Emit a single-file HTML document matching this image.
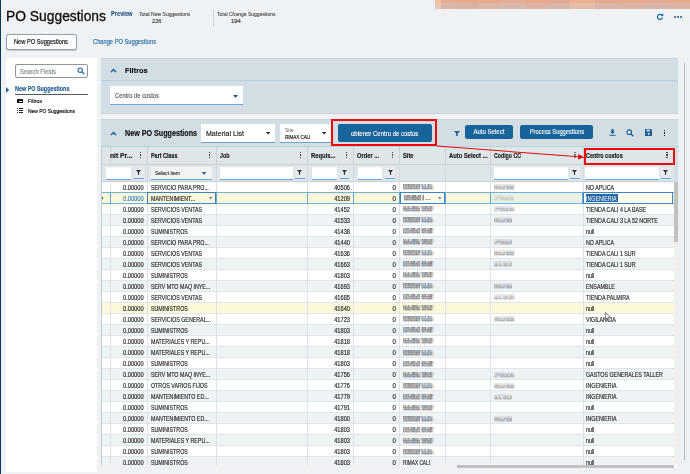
<!DOCTYPE html>
<html><head><meta charset="utf-8"><title>PO Suggestions</title>
<style>
html,body{margin:0;padding:0;}
body{width:690px;height:474px;overflow:hidden;position:relative;background:#eef2f5;font-family:"Liberation Sans", sans-serif;}
</style></head><body>
<svg width="0" height="0" style="position:absolute"><defs><symbol id="mz0" viewBox="0 0 31 6" width="31" height="6"><g filter="url(#bl)"><rect x="0.0" y="0.0" width="1.6" height="1.8" fill="#7a6455"/><rect x="0.0" y="1.8" width="1.6" height="1.8" fill="#5f6876"/><rect x="0.0" y="3.6" width="1.6" height="1.8" fill="#9a8270"/><rect x="1.6" y="0.0" width="1.6" height="1.8" fill="#66707e"/><rect x="1.6" y="1.8" width="1.6" height="1.8" fill="#9a8270"/><rect x="1.6" y="3.6" width="1.6" height="1.8" fill="#5a6f88"/><rect x="3.1" y="0.0" width="1.6" height="1.8" fill="#5a6f88"/><rect x="3.1" y="1.8" width="1.6" height="1.8" fill="#9a8270"/><rect x="3.1" y="3.6" width="1.6" height="1.8" fill="#66707e"/><rect x="4.7" y="0.0" width="1.6" height="1.8" fill="#5e5a5e"/><rect x="4.7" y="1.8" width="1.6" height="1.8" fill="#66707e"/><rect x="4.7" y="3.6" width="1.6" height="1.8" fill="#66707e"/><rect x="6.2" y="0.0" width="1.6" height="1.8" fill="#5f6876"/><rect x="6.2" y="1.8" width="1.6" height="1.8" fill="#5f6876"/><rect x="6.2" y="3.6" width="1.6" height="1.8" fill="#7a6455"/><rect x="7.8" y="0.0" width="1.6" height="1.8" fill="#7a6455"/><rect x="7.8" y="1.8" width="1.6" height="1.8" fill="#66707e"/><rect x="7.8" y="3.6" width="1.6" height="1.8" fill="#7a6455"/><rect x="9.3" y="0.0" width="1.6" height="1.8" fill="#66707e"/><rect x="9.3" y="1.8" width="1.6" height="1.8" fill="#8a7868"/><rect x="9.3" y="3.6" width="1.6" height="1.8" fill="#5a6f88"/><rect x="10.9" y="0.0" width="1.6" height="1.8" fill="#66707e"/><rect x="10.9" y="1.8" width="1.6" height="1.8" fill="#9a8270"/><rect x="10.9" y="3.6" width="1.6" height="1.8" fill="#8a7868"/><rect x="12.4" y="0.0" width="1.6" height="1.8" fill="#8092a6"/><rect x="12.4" y="1.8" width="1.6" height="1.8" fill="#5e5a5e"/><rect x="12.4" y="3.6" width="1.6" height="1.8" fill="#5e5a5e"/><rect x="14.0" y="0.0" width="1.6" height="1.8" fill="#707a88"/><rect x="14.0" y="1.8" width="1.6" height="1.8" fill="#8a7868"/><rect x="14.0" y="3.6" width="1.6" height="1.8" fill="#707a88"/><rect x="15.5" y="0.0" width="1.6" height="1.8" fill="#5a6f88"/><rect x="15.5" y="1.8" width="1.6" height="1.8" fill="#55657a"/><rect x="15.5" y="3.6" width="1.6" height="1.8" fill="#8a7868"/><rect x="17.1" y="0.0" width="1.6" height="1.8" fill="#a9bcd2"/><rect x="17.1" y="1.8" width="1.6" height="1.8" fill="#b9c6d6"/><rect x="18.6" y="0.0" width="1.6" height="1.8" fill="#8a7868"/><rect x="18.6" y="1.8" width="1.6" height="1.8" fill="#8a7868"/><rect x="18.6" y="3.6" width="1.6" height="1.8" fill="#66707e"/><rect x="20.2" y="0.0" width="1.6" height="1.8" fill="#b9c6d6"/><rect x="20.2" y="1.8" width="1.6" height="1.8" fill="#707a88"/><rect x="20.2" y="3.6" width="1.6" height="1.8" fill="#5a6f88"/><rect x="21.7" y="0.0" width="1.6" height="1.8" fill="#707a88"/><rect x="21.7" y="1.8" width="1.6" height="1.8" fill="#8092a6"/><rect x="21.7" y="3.6" width="1.6" height="1.8" fill="#55657a"/><rect x="23.3" y="0.0" width="1.6" height="1.8" fill="#c9d3df"/><rect x="23.3" y="1.8" width="1.6" height="1.8" fill="#8092a6"/><rect x="23.3" y="3.6" width="1.6" height="1.8" fill="#66707e"/><rect x="24.8" y="0.0" width="1.6" height="1.8" fill="#5f6876"/><rect x="24.8" y="1.8" width="1.6" height="1.8" fill="#707a88"/><rect x="24.8" y="3.6" width="1.6" height="1.8" fill="#5e5a5e"/><rect x="26.4" y="0.0" width="1.6" height="1.8" fill="#8092a6"/><rect x="26.4" y="1.8" width="1.6" height="1.8" fill="#8092a6"/><rect x="26.4" y="3.6" width="1.6" height="1.8" fill="#707a88"/><rect x="27.9" y="0.0" width="1.6" height="1.8" fill="#a9bcd2"/><rect x="27.9" y="1.8" width="1.6" height="1.8" fill="#707a88"/><rect x="27.9" y="3.6" width="1.6" height="1.8" fill="#8a7868"/><rect x="29.5" y="1.8" width="1.6" height="1.8" fill="#d8c2a8"/><rect x="29.5" y="3.6" width="1.6" height="1.8" fill="#d8c2a8"/></g></symbol><symbol id="mc0" viewBox="0 0 21 6" width="21" height="6"><g filter="url(#bl)" opacity="0.6"><rect x="0.0" y="0.0" width="1.6" height="1.8" fill="#d8c2a8"/><rect x="0.0" y="1.8" width="1.6" height="1.8" fill="#5f6876"/><rect x="0.0" y="3.6" width="1.6" height="1.8" fill="#8092a6"/><rect x="1.6" y="0.0" width="1.6" height="1.8" fill="#c8cdd4"/><rect x="1.6" y="1.8" width="1.6" height="1.8" fill="#7a6455"/><rect x="1.6" y="3.6" width="1.6" height="1.8" fill="#707a88"/><rect x="3.1" y="0.0" width="1.6" height="1.8" fill="#d8c2a8"/><rect x="3.1" y="1.8" width="1.6" height="1.8" fill="#55657a"/><rect x="3.1" y="3.6" width="1.6" height="1.8" fill="#9a8270"/><rect x="4.7" y="0.0" width="1.6" height="1.8" fill="#e2cfb6"/><rect x="4.7" y="1.8" width="1.6" height="1.8" fill="#8a7868"/><rect x="4.7" y="3.6" width="1.6" height="1.8" fill="#7a6455"/><rect x="6.2" y="0.0" width="1.6" height="1.8" fill="#c8cdd4"/><rect x="6.2" y="1.8" width="1.6" height="1.8" fill="#9a8270"/><rect x="6.2" y="3.6" width="1.6" height="1.8" fill="#66707e"/><rect x="7.8" y="0.0" width="1.6" height="1.8" fill="#c8cdd4"/><rect x="7.8" y="1.8" width="1.6" height="1.8" fill="#d8c2a8"/><rect x="7.8" y="3.6" width="1.6" height="1.8" fill="#5f6876"/><rect x="9.3" y="0.0" width="1.6" height="1.8" fill="#e2cfb6"/><rect x="9.3" y="1.8" width="1.6" height="1.8" fill="#55657a"/><rect x="9.3" y="3.6" width="1.6" height="1.8" fill="#55657a"/><rect x="10.9" y="0.0" width="1.6" height="1.8" fill="#b9c6d6"/><rect x="10.9" y="1.8" width="1.6" height="1.8" fill="#8092a6"/><rect x="10.9" y="3.6" width="1.6" height="1.8" fill="#b9c6d6"/><rect x="12.4" y="0.0" width="1.6" height="1.8" fill="#d8c2a8"/><rect x="12.4" y="1.8" width="1.6" height="1.8" fill="#5a6f88"/><rect x="12.4" y="3.6" width="1.6" height="1.8" fill="#5e5a5e"/><rect x="14.0" y="0.0" width="1.6" height="1.8" fill="#b9c6d6"/><rect x="14.0" y="1.8" width="1.6" height="1.8" fill="#8a7868"/><rect x="14.0" y="3.6" width="1.6" height="1.8" fill="#66707e"/><rect x="15.5" y="0.0" width="1.6" height="1.8" fill="#b9c6d6"/><rect x="15.5" y="1.8" width="1.6" height="1.8" fill="#66707e"/><rect x="15.5" y="3.6" width="1.6" height="1.8" fill="#7a6455"/><rect x="17.1" y="0.0" width="1.6" height="1.8" fill="#c9d3df"/><rect x="17.1" y="1.8" width="1.6" height="1.8" fill="#66707e"/><rect x="17.1" y="3.6" width="1.6" height="1.8" fill="#5f6876"/><rect x="18.6" y="0.0" width="1.6" height="1.8" fill="#d8c2a8"/><rect x="18.6" y="1.8" width="1.6" height="1.8" fill="#66707e"/><rect x="18.6" y="3.6" width="1.6" height="1.8" fill="#55657a"/></g></symbol><symbol id="mz1" viewBox="0 0 31 6" width="31" height="6"><g filter="url(#bl)"><rect x="0.0" y="0.0" width="1.6" height="1.8" fill="#707a88"/><rect x="0.0" y="1.8" width="1.6" height="1.8" fill="#66707e"/><rect x="0.0" y="3.6" width="1.6" height="1.8" fill="#5a6f88"/><rect x="1.6" y="0.0" width="1.6" height="1.8" fill="#8092a6"/><rect x="1.6" y="1.8" width="1.6" height="1.8" fill="#8092a6"/><rect x="1.6" y="3.6" width="1.6" height="1.8" fill="#707a88"/><rect x="3.1" y="0.0" width="1.6" height="1.8" fill="#5a6f88"/><rect x="3.1" y="1.8" width="1.6" height="1.8" fill="#707a88"/><rect x="3.1" y="3.6" width="1.6" height="1.8" fill="#7a6455"/><rect x="4.7" y="0.0" width="1.6" height="1.8" fill="#5e5a5e"/><rect x="4.7" y="1.8" width="1.6" height="1.8" fill="#9a8270"/><rect x="4.7" y="3.6" width="1.6" height="1.8" fill="#9a8270"/><rect x="6.2" y="0.0" width="1.6" height="1.8" fill="#e2cfb6"/><rect x="6.2" y="1.8" width="1.6" height="1.8" fill="#5a6f88"/><rect x="6.2" y="3.6" width="1.6" height="1.8" fill="#707a88"/><rect x="7.8" y="0.0" width="1.6" height="1.8" fill="#7a6455"/><rect x="7.8" y="1.8" width="1.6" height="1.8" fill="#5e5a5e"/><rect x="7.8" y="3.6" width="1.6" height="1.8" fill="#9a8270"/><rect x="9.3" y="0.0" width="1.6" height="1.8" fill="#5e5a5e"/><rect x="9.3" y="1.8" width="1.6" height="1.8" fill="#5e5a5e"/><rect x="9.3" y="3.6" width="1.6" height="1.8" fill="#55657a"/><rect x="10.9" y="0.0" width="1.6" height="1.8" fill="#5e5a5e"/><rect x="10.9" y="1.8" width="1.6" height="1.8" fill="#8092a6"/><rect x="10.9" y="3.6" width="1.6" height="1.8" fill="#5f6876"/><rect x="12.4" y="0.0" width="1.6" height="1.8" fill="#c9d3df"/><rect x="12.4" y="1.8" width="1.6" height="1.8" fill="#5e5a5e"/><rect x="12.4" y="3.6" width="1.6" height="1.8" fill="#8a7868"/><rect x="14.0" y="0.0" width="1.6" height="1.8" fill="#8a7868"/><rect x="14.0" y="1.8" width="1.6" height="1.8" fill="#8a7868"/><rect x="14.0" y="3.6" width="1.6" height="1.8" fill="#5a6f88"/><rect x="15.5" y="0.0" width="1.6" height="1.8" fill="#5e5a5e"/><rect x="15.5" y="1.8" width="1.6" height="1.8" fill="#8092a6"/><rect x="15.5" y="3.6" width="1.6" height="1.8" fill="#66707e"/><rect x="17.1" y="1.8" width="1.6" height="1.8" fill="#c9d3df"/><rect x="18.6" y="0.0" width="1.6" height="1.8" fill="#5a6f88"/><rect x="18.6" y="1.8" width="1.6" height="1.8" fill="#5e5a5e"/><rect x="18.6" y="3.6" width="1.6" height="1.8" fill="#7a6455"/><rect x="20.2" y="0.0" width="1.6" height="1.8" fill="#8a7868"/><rect x="20.2" y="1.8" width="1.6" height="1.8" fill="#55657a"/><rect x="20.2" y="3.6" width="1.6" height="1.8" fill="#5a6f88"/><rect x="21.7" y="0.0" width="1.6" height="1.8" fill="#7a6455"/><rect x="21.7" y="1.8" width="1.6" height="1.8" fill="#5f6876"/><rect x="21.7" y="3.6" width="1.6" height="1.8" fill="#8092a6"/><rect x="23.3" y="0.0" width="1.6" height="1.8" fill="#d8c2a8"/><rect x="23.3" y="1.8" width="1.6" height="1.8" fill="#66707e"/><rect x="23.3" y="3.6" width="1.6" height="1.8" fill="#8a7868"/><rect x="24.8" y="0.0" width="1.6" height="1.8" fill="#9a8270"/><rect x="24.8" y="1.8" width="1.6" height="1.8" fill="#5f6876"/><rect x="24.8" y="3.6" width="1.6" height="1.8" fill="#5a6f88"/><rect x="26.4" y="0.0" width="1.6" height="1.8" fill="#7a6455"/><rect x="26.4" y="1.8" width="1.6" height="1.8" fill="#5e5a5e"/><rect x="26.4" y="3.6" width="1.6" height="1.8" fill="#5e5a5e"/><rect x="27.9" y="0.0" width="1.6" height="1.8" fill="#5e5a5e"/><rect x="27.9" y="1.8" width="1.6" height="1.8" fill="#5e5a5e"/><rect x="27.9" y="3.6" width="1.6" height="1.8" fill="#8a7868"/><rect x="29.5" y="0.0" width="1.6" height="1.8" fill="#a9bcd2"/><rect x="29.5" y="3.6" width="1.6" height="1.8" fill="#c9d3df"/></g></symbol><symbol id="mc1" viewBox="0 0 21 6" width="21" height="6"><g filter="url(#bl)" opacity="0.6"><rect x="0.0" y="0.0" width="1.6" height="1.8" fill="#c8cdd4"/><rect x="0.0" y="1.8" width="1.6" height="1.8" fill="#b9c6d6"/><rect x="0.0" y="3.6" width="1.6" height="1.8" fill="#66707e"/><rect x="1.6" y="0.0" width="1.6" height="1.8" fill="#c8cdd4"/><rect x="1.6" y="1.8" width="1.6" height="1.8" fill="#9a8270"/><rect x="1.6" y="3.6" width="1.6" height="1.8" fill="#55657a"/><rect x="3.1" y="0.0" width="1.6" height="1.8" fill="#c8cdd4"/><rect x="3.1" y="1.8" width="1.6" height="1.8" fill="#e2cfb6"/><rect x="3.1" y="3.6" width="1.6" height="1.8" fill="#9a8270"/><rect x="4.7" y="0.0" width="1.6" height="1.8" fill="#d8c2a8"/><rect x="4.7" y="1.8" width="1.6" height="1.8" fill="#9a8270"/><rect x="4.7" y="3.6" width="1.6" height="1.8" fill="#9a8270"/><rect x="6.2" y="0.0" width="1.6" height="1.8" fill="#a9bcd2"/><rect x="6.2" y="1.8" width="1.6" height="1.8" fill="#c9d3df"/><rect x="6.2" y="3.6" width="1.6" height="1.8" fill="#7a6455"/><rect x="7.8" y="0.0" width="1.6" height="1.8" fill="#c8cdd4"/><rect x="7.8" y="1.8" width="1.6" height="1.8" fill="#c9d3df"/><rect x="7.8" y="3.6" width="1.6" height="1.8" fill="#c9d3df"/><rect x="9.3" y="0.0" width="1.6" height="1.8" fill="#d8c2a8"/><rect x="9.3" y="1.8" width="1.6" height="1.8" fill="#8092a6"/><rect x="9.3" y="3.6" width="1.6" height="1.8" fill="#66707e"/><rect x="10.9" y="0.0" width="1.6" height="1.8" fill="#c8cdd4"/><rect x="10.9" y="1.8" width="1.6" height="1.8" fill="#9a8270"/><rect x="10.9" y="3.6" width="1.6" height="1.8" fill="#5f6876"/><rect x="12.4" y="0.0" width="1.6" height="1.8" fill="#e2cfb6"/><rect x="12.4" y="1.8" width="1.6" height="1.8" fill="#9a8270"/><rect x="12.4" y="3.6" width="1.6" height="1.8" fill="#9a8270"/><rect x="14.0" y="0.0" width="1.6" height="1.8" fill="#b9c6d6"/><rect x="14.0" y="1.8" width="1.6" height="1.8" fill="#e2cfb6"/><rect x="14.0" y="3.6" width="1.6" height="1.8" fill="#9a8270"/><rect x="15.5" y="0.0" width="1.6" height="1.8" fill="#d8c2a8"/><rect x="15.5" y="1.8" width="1.6" height="1.8" fill="#707a88"/><rect x="15.5" y="3.6" width="1.6" height="1.8" fill="#5f6876"/><rect x="17.1" y="0.0" width="1.6" height="1.8" fill="#c8cdd4"/><rect x="17.1" y="1.8" width="1.6" height="1.8" fill="#9a8270"/><rect x="17.1" y="3.6" width="1.6" height="1.8" fill="#8092a6"/><rect x="18.6" y="0.0" width="1.6" height="1.8" fill="#b9c6d6"/><rect x="18.6" y="1.8" width="1.6" height="1.8" fill="#8092a6"/><rect x="18.6" y="3.6" width="1.6" height="1.8" fill="#8a7868"/></g></symbol><symbol id="mz2" viewBox="0 0 31 6" width="31" height="6"><g filter="url(#bl)"><rect x="0.0" y="0.0" width="1.6" height="1.8" fill="#9a8270"/><rect x="0.0" y="1.8" width="1.6" height="1.8" fill="#5e5a5e"/><rect x="0.0" y="3.6" width="1.6" height="1.8" fill="#8092a6"/><rect x="1.6" y="0.0" width="1.6" height="1.8" fill="#8092a6"/><rect x="1.6" y="1.8" width="1.6" height="1.8" fill="#5e5a5e"/><rect x="1.6" y="3.6" width="1.6" height="1.8" fill="#707a88"/><rect x="3.1" y="0.0" width="1.6" height="1.8" fill="#d8c2a8"/><rect x="3.1" y="1.8" width="1.6" height="1.8" fill="#7a6455"/><rect x="3.1" y="3.6" width="1.6" height="1.8" fill="#55657a"/><rect x="4.7" y="0.0" width="1.6" height="1.8" fill="#5a6f88"/><rect x="4.7" y="1.8" width="1.6" height="1.8" fill="#55657a"/><rect x="4.7" y="3.6" width="1.6" height="1.8" fill="#707a88"/><rect x="6.2" y="0.0" width="1.6" height="1.8" fill="#d8c2a8"/><rect x="6.2" y="1.8" width="1.6" height="1.8" fill="#8a7868"/><rect x="6.2" y="3.6" width="1.6" height="1.8" fill="#7a6455"/><rect x="7.8" y="0.0" width="1.6" height="1.8" fill="#d8c2a8"/><rect x="7.8" y="1.8" width="1.6" height="1.8" fill="#5a6f88"/><rect x="7.8" y="3.6" width="1.6" height="1.8" fill="#8092a6"/><rect x="9.3" y="0.0" width="1.6" height="1.8" fill="#5e5a5e"/><rect x="9.3" y="1.8" width="1.6" height="1.8" fill="#55657a"/><rect x="9.3" y="3.6" width="1.6" height="1.8" fill="#55657a"/><rect x="10.9" y="0.0" width="1.6" height="1.8" fill="#5e5a5e"/><rect x="10.9" y="1.8" width="1.6" height="1.8" fill="#5a6f88"/><rect x="10.9" y="3.6" width="1.6" height="1.8" fill="#5f6876"/><rect x="12.4" y="0.0" width="1.6" height="1.8" fill="#8092a6"/><rect x="12.4" y="1.8" width="1.6" height="1.8" fill="#5f6876"/><rect x="12.4" y="3.6" width="1.6" height="1.8" fill="#9a8270"/><rect x="14.0" y="0.0" width="1.6" height="1.8" fill="#9a8270"/><rect x="14.0" y="1.8" width="1.6" height="1.8" fill="#5a6f88"/><rect x="14.0" y="3.6" width="1.6" height="1.8" fill="#5e5a5e"/><rect x="15.5" y="0.0" width="1.6" height="1.8" fill="#b9c6d6"/><rect x="15.5" y="1.8" width="1.6" height="1.8" fill="#707a88"/><rect x="15.5" y="3.6" width="1.6" height="1.8" fill="#7a6455"/><rect x="17.1" y="0.0" width="1.6" height="1.8" fill="#d8c2a8"/><rect x="18.6" y="0.0" width="1.6" height="1.8" fill="#707a88"/><rect x="18.6" y="1.8" width="1.6" height="1.8" fill="#9a8270"/><rect x="18.6" y="3.6" width="1.6" height="1.8" fill="#66707e"/><rect x="20.2" y="0.0" width="1.6" height="1.8" fill="#8a7868"/><rect x="20.2" y="1.8" width="1.6" height="1.8" fill="#5f6876"/><rect x="20.2" y="3.6" width="1.6" height="1.8" fill="#7a6455"/><rect x="21.7" y="0.0" width="1.6" height="1.8" fill="#5a6f88"/><rect x="21.7" y="1.8" width="1.6" height="1.8" fill="#5f6876"/><rect x="21.7" y="3.6" width="1.6" height="1.8" fill="#707a88"/><rect x="23.3" y="0.0" width="1.6" height="1.8" fill="#5e5a5e"/><rect x="23.3" y="1.8" width="1.6" height="1.8" fill="#5a6f88"/><rect x="23.3" y="3.6" width="1.6" height="1.8" fill="#8a7868"/><rect x="24.8" y="0.0" width="1.6" height="1.8" fill="#a9bcd2"/><rect x="24.8" y="1.8" width="1.6" height="1.8" fill="#707a88"/><rect x="24.8" y="3.6" width="1.6" height="1.8" fill="#5f6876"/><rect x="26.4" y="0.0" width="1.6" height="1.8" fill="#5e5a5e"/><rect x="26.4" y="1.8" width="1.6" height="1.8" fill="#7a6455"/><rect x="26.4" y="3.6" width="1.6" height="1.8" fill="#7a6455"/><rect x="27.9" y="0.0" width="1.6" height="1.8" fill="#707a88"/><rect x="27.9" y="1.8" width="1.6" height="1.8" fill="#9a8270"/><rect x="27.9" y="3.6" width="1.6" height="1.8" fill="#707a88"/><rect x="29.5" y="0.0" width="1.6" height="1.8" fill="#d8c2a8"/><rect x="29.5" y="1.8" width="1.6" height="1.8" fill="#b9c6d6"/></g></symbol><symbol id="mc2" viewBox="0 0 21 6" width="21" height="6"><g filter="url(#bl)" opacity="0.6"><rect x="0.0" y="0.0" width="1.6" height="1.8" fill="#b9c6d6"/><rect x="0.0" y="1.8" width="1.6" height="1.8" fill="#d8c2a8"/><rect x="0.0" y="3.6" width="1.6" height="1.8" fill="#9a8270"/><rect x="1.6" y="0.0" width="1.6" height="1.8" fill="#d8c2a8"/><rect x="1.6" y="1.8" width="1.6" height="1.8" fill="#9a8270"/><rect x="1.6" y="3.6" width="1.6" height="1.8" fill="#8092a6"/><rect x="3.1" y="0.0" width="1.6" height="1.8" fill="#a9bcd2"/><rect x="3.1" y="1.8" width="1.6" height="1.8" fill="#5a6f88"/><rect x="3.1" y="3.6" width="1.6" height="1.8" fill="#b9c6d6"/><rect x="4.7" y="0.0" width="1.6" height="1.8" fill="#c8cdd4"/><rect x="4.7" y="1.8" width="1.6" height="1.8" fill="#55657a"/><rect x="4.7" y="3.6" width="1.6" height="1.8" fill="#b9c6d6"/><rect x="6.2" y="0.0" width="1.6" height="1.8" fill="#a9bcd2"/><rect x="6.2" y="1.8" width="1.6" height="1.8" fill="#9a8270"/><rect x="6.2" y="3.6" width="1.6" height="1.8" fill="#707a88"/><rect x="7.8" y="0.0" width="1.6" height="1.8" fill="#c8cdd4"/><rect x="7.8" y="1.8" width="1.6" height="1.8" fill="#5e5a5e"/><rect x="7.8" y="3.6" width="1.6" height="1.8" fill="#8a7868"/><rect x="9.3" y="0.0" width="1.6" height="1.8" fill="#d8c2a8"/><rect x="9.3" y="1.8" width="1.6" height="1.8" fill="#55657a"/><rect x="9.3" y="3.6" width="1.6" height="1.8" fill="#8a7868"/><rect x="10.9" y="0.0" width="1.6" height="1.8" fill="#c8cdd4"/><rect x="10.9" y="1.8" width="1.6" height="1.8" fill="#a9bcd2"/><rect x="10.9" y="3.6" width="1.6" height="1.8" fill="#7a6455"/><rect x="12.4" y="0.0" width="1.6" height="1.8" fill="#c9d3df"/><rect x="12.4" y="1.8" width="1.6" height="1.8" fill="#55657a"/><rect x="12.4" y="3.6" width="1.6" height="1.8" fill="#7a6455"/><rect x="14.0" y="0.0" width="1.6" height="1.8" fill="#a9bcd2"/><rect x="14.0" y="1.8" width="1.6" height="1.8" fill="#a9bcd2"/><rect x="14.0" y="3.6" width="1.6" height="1.8" fill="#9a8270"/><rect x="15.5" y="0.0" width="1.6" height="1.8" fill="#c8cdd4"/><rect x="15.5" y="1.8" width="1.6" height="1.8" fill="#707a88"/><rect x="15.5" y="3.6" width="1.6" height="1.8" fill="#66707e"/><rect x="17.1" y="0.0" width="1.6" height="1.8" fill="#c9d3df"/><rect x="17.1" y="1.8" width="1.6" height="1.8" fill="#5f6876"/><rect x="17.1" y="3.6" width="1.6" height="1.8" fill="#8092a6"/><rect x="18.6" y="0.0" width="1.6" height="1.8" fill="#c9d3df"/><rect x="18.6" y="1.8" width="1.6" height="1.8" fill="#8092a6"/><rect x="18.6" y="3.6" width="1.6" height="1.8" fill="#5f6876"/></g></symbol><filter id="bl" x="-10%" y="-20%" width="120%" height="140%"><feGaussianBlur stdDeviation="0.35"/></filter></defs></svg>
<div style="position:absolute;left:0px;top:0px;width:1.2px;height:474px;background:#0b3b52"></div>
<div style="position:absolute;left:6.00px;top:8.95px;font-size:14px;line-height:14px;font-weight:normal;color:#0d0d0d;white-space:pre;transform:scaleX(0.988);transform-origin:0 0;-webkit-text-stroke:0.3px #0d0d0d;">PO Suggestions</div>
<div style="position:absolute;left:111.00px;top:10.64px;font-size:6.8px;line-height:6.8px;font-weight:bold;color:#1d4f7c;white-space:pre;transform:scaleX(0.836);transform-origin:0 0;-webkit-text-stroke:0.1px #1d4f7c;">Preview</div>
<div style="position:absolute;left:138.60px;top:11.66px;font-size:5.6px;line-height:5.6px;font-weight:normal;color:#5a5a5a;white-space:pre;transform:scaleX(0.901);transform-origin:0 0;-webkit-text-stroke:0.18px #5a5a5a;">Total New Suggestions</div>
<div style="position:absolute;left:152.20px;top:18.12px;font-size:6px;line-height:6px;font-weight:normal;color:#444;white-space:pre;transform:scaleX(0.949);transform-origin:0 0;-webkit-text-stroke:0.18px #444;">226</div>
<div style="position:absolute;left:213px;top:8.7px;width:0.8px;height:18px;background:#cfd6db"></div>
<div style="position:absolute;left:217.10px;top:11.66px;font-size:5.6px;line-height:5.6px;font-weight:normal;color:#5a5a5a;white-space:pre;transform:scaleX(0.896);transform-origin:0 0;-webkit-text-stroke:0.18px #5a5a5a;">Total Change Suggestions</div>
<div style="position:absolute;left:231.00px;top:18.12px;font-size:6px;line-height:6px;font-weight:normal;color:#444;white-space:pre;transform:scaleX(0.989);transform-origin:0 0;-webkit-text-stroke:0.18px #444;">194</div>
<svg style="position:absolute;left:656px;top:13px" width="8" height="8" viewBox="0 0 8 8"><path d="M6.1 2.6A2.5 2.5 0 1 0 6.4 4.5" fill="none" stroke="#1f6aa5" stroke-width="1.25"/><path d="M4.6 1.9L7.3 0.6L7.1 3.6Z" fill="#1f6aa5"/></svg>
<div style="position:absolute;left:674.4px;top:15.8px;width:1.9px;height:1.9px;background:#1f5a85;border-radius:50%"></div>
<div style="position:absolute;left:677.3px;top:15.8px;width:1.9px;height:1.9px;background:#1f5a85;border-radius:50%"></div>
<div style="position:absolute;left:680.1999999999999px;top:15.8px;width:1.9px;height:1.9px;background:#1f5a85;border-radius:50%"></div>
<div style="position:absolute;left:5.5px;top:33.5px;width:71px;height:16px;background:#fbfcfd;border:1px solid #979fa5;border-radius:2.5px;box-sizing:border-box;box-shadow:0 0.6px 1px rgba(0,0,0,.18)"></div>
<div style="position:absolute;left:14.00px;top:39.04px;font-size:6.8px;line-height:6.8px;font-weight:normal;color:#111;white-space:pre;transform:scaleX(0.835);transform-origin:0 0;-webkit-text-stroke:0.18px #111;">New PO Suggestions</div>
<div style="position:absolute;left:93.00px;top:39.24px;font-size:6.8px;line-height:6.8px;font-weight:normal;color:#2b6fa3;white-space:pre;transform:scaleX(0.842);transform-origin:0 0;-webkit-text-stroke:0.18px #2b6fa3;">Change PO Suggestions</div>
<div style="position:absolute;left:6px;top:58px;width:91px;height:414px;background:#fff"></div>
<div style="position:absolute;left:14.7px;top:64.2px;width:73.1px;height:14.1px;background:#fff;border:1px solid #8e969b;border-radius:2px;box-sizing:border-box"></div>
<div style="position:absolute;left:20.00px;top:68.54px;font-size:6.8px;line-height:6.8px;font-weight:normal;color:#858a8e;white-space:pre;transform:scaleX(0.866);transform-origin:0 0;-webkit-text-stroke:0.18px #858a8e;">Search Fields</div>
<svg style="position:absolute;left:77px;top:66.5px" width="8" height="8" viewBox="0 0 8 8"><circle cx="3.2" cy="3.2" r="2.2" fill="none" stroke="#2a6ea8" stroke-width="1.1"/><path d="M4.8 4.8L7.2 7.2" stroke="#2a6ea8" stroke-width="1.3"/></svg>
<svg style="position:absolute;left:6px;top:86.5px" width="4" height="6" viewBox="0 0 4 6"><path d="M0 0L3.2 3L0 6Z" fill="#1f6aa5"/></svg>
<div style="position:absolute;left:15.00px;top:85.21px;font-size:7.2px;line-height:7.2px;font-weight:bold;color:#1b5990;white-space:pre;transform:scaleX(0.753);transform-origin:0 0;-webkit-text-stroke:0.15px #1b5990;">New PO Suggestions</div>
<div style="position:absolute;left:14.7px;top:93.8px;width:73.6px;height:1.2px;background:#555b60"></div>
<div style="position:absolute;left:17px;top:99.2px;width:6px;height:4px;background:#111;border-radius:0.6px"></div>
<div style="position:absolute;left:18.5px;top:100.6px;width:3px;height:0.8px;background:#fff"></div>
<div style="position:absolute;left:27.50px;top:98.12px;font-size:6px;line-height:6px;font-weight:normal;color:#111;white-space:pre;transform:scaleX(0.857);transform-origin:0 0;-webkit-text-stroke:0.18px #111;">Filtros</div>
<div style="position:absolute;left:17px;top:108.0px;width:1.2px;height:1.1px;background:#222"></div>
<div style="position:absolute;left:18.8px;top:108.0px;width:4.2px;height:1.1px;background:#222"></div>
<div style="position:absolute;left:17px;top:109.9px;width:1.2px;height:1.1px;background:#222"></div>
<div style="position:absolute;left:18.8px;top:109.9px;width:4.2px;height:1.1px;background:#222"></div>
<div style="position:absolute;left:17px;top:111.8px;width:1.2px;height:1.1px;background:#222"></div>
<div style="position:absolute;left:18.8px;top:111.8px;width:4.2px;height:1.1px;background:#222"></div>
<div style="position:absolute;left:27.50px;top:108.12px;font-size:6px;line-height:6px;font-weight:normal;color:#111;white-space:pre;transform:scaleX(0.824);transform-origin:0 0;-webkit-text-stroke:0.18px #111;">New PO Suggestions</div>
<div style="position:absolute;left:100.5px;top:58px;width:578.5px;height:55.7px;background:#d2dee4"></div>
<div style="position:absolute;left:100.5px;top:79.7px;width:578.5px;height:1.8px;background:#b5d1db"></div>
<div style="position:absolute;left:100.5px;top:57.6px;width:578.5px;height:0.8px;background:#cdd3d7"></div>
<div style="position:absolute;left:100.5px;top:113.2px;width:578.5px;height:0.8px;background:#cdd3d7"></div>
<svg style="position:absolute;left:110px;top:67.5px" width="7" height="5" viewBox="0 0 7 5"><path d="M1 4L3.5 1.5L6 4" fill="none" stroke="#1f5f95" stroke-width="1.5"/></svg>
<div style="position:absolute;left:124.50px;top:66.57px;font-size:7.6px;line-height:7.6px;font-weight:bold;color:#111;white-space:pre;transform:scaleX(0.977);transform-origin:0 0;-webkit-text-stroke:0.15px #111;">Filtros</div>
<div style="position:absolute;left:110px;top:86.3px;width:133px;height:18.7px;background:#fff;border-bottom:1.5px solid #6aa6cc;box-sizing:border-box"></div>
<div style="position:absolute;left:115.00px;top:93.44px;font-size:6.8px;line-height:6.8px;font-weight:normal;color:#5f5f5f;white-space:pre;transform:scaleX(0.856);transform-origin:0 0;-webkit-text-stroke:0.18px #5f5f5f;">Centro de costos</div>
<svg style="position:absolute;left:233px;top:94.5px" width="5" height="3" viewBox="0 0 5 3"><path d="M0 0H5L2.5 3Z" fill="#1f5f95"/></svg>
<div style="position:absolute;left:100.5px;top:119.4px;width:578.5px;height:348px;background:#d2dee4"></div>
<div style="position:absolute;left:100.5px;top:119px;width:578.5px;height:0.8px;background:#cdd3d7"></div>
<div style="position:absolute;left:678.3px;top:58px;width:1px;height:55.7px;background:#e9eef1"></div>
<div style="position:absolute;left:678.3px;top:119.4px;width:1px;height:348px;background:#e9eef1"></div>
<svg style="position:absolute;left:110px;top:130.5px" width="7" height="5" viewBox="0 0 7 5"><path d="M1 4L3.5 1.5L6 4" fill="none" stroke="#1f5f95" stroke-width="1.5"/></svg>
<div style="position:absolute;left:124.70px;top:128.89px;font-size:8.4px;line-height:8.4px;font-weight:bold;color:#111;white-space:pre;transform:scaleX(0.856);transform-origin:0 0;-webkit-text-stroke:0.15px #111;">New PO Suggestions</div>
<div style="position:absolute;left:201px;top:123.7px;width:74px;height:19px;background:#fff;border-bottom:1.5px solid #6aa6cc;box-sizing:border-box"></div>
<div style="position:absolute;left:205.90px;top:129.83px;font-size:8px;line-height:8px;font-weight:normal;color:#222;white-space:pre;transform:scaleX(0.881);transform-origin:0 0;-webkit-text-stroke:0.18px #222;">Material List</div>
<svg style="position:absolute;left:266px;top:132.4px" width="4.2" height="2.6" viewBox="0 0 5 3"><path d="M0 0H5L2.5 3Z" fill="#222"/></svg>
<div style="position:absolute;left:280px;top:123.7px;width:50.5px;height:19px;background:#fff;border-bottom:1.5px solid #6aa6cc;box-sizing:border-box"></div>
<div style="position:absolute;left:284.50px;top:127.57px;font-size:5px;line-height:5px;font-weight:normal;color:#666;white-space:pre;transform:scaleX(0.986);transform-origin:0 0;">Site</div>
<div style="position:absolute;left:284.50px;top:135.00px;font-size:5.2px;line-height:5.2px;font-weight:normal;color:#222;white-space:pre;transform:scaleX(0.862);transform-origin:0 0;-webkit-text-stroke:0.18px #222;">RIMAX CALI</div>
<svg style="position:absolute;left:322px;top:132.4px" width="4.2" height="2.6" viewBox="0 0 5 3"><path d="M0 0H5L2.5 3Z" fill="#222"/></svg>
<div style="position:absolute;left:337.5px;top:123.8px;width:94px;height:18.2px;background:#17649a;border-radius:2px"></div>
<div style="position:absolute;left:351.00px;top:130.71px;font-size:6.6px;line-height:6.6px;font-weight:normal;color:#fff;white-space:pre;transform:scaleX(0.909);transform-origin:0 0;-webkit-text-stroke:0.12px #fff;">obtener Centro de costos</div>
<div style="position:absolute;left:331.2px;top:119.2px;width:106px;height:26.8px;border:2.3px solid #f2070d;box-sizing:border-box"></div>
<svg style="position:absolute;left:453.5px;top:130.5px" width="6" height="5" viewBox="0 0 6 5"><path d="M0 0H6L3.8 2.4V5H2.2V2.4Z" fill="#1f5f95"/></svg>
<div style="position:absolute;left:465px;top:125.4px;width:48px;height:13.6px;background:#17649a;border-radius:2px"></div>
<div style="position:absolute;left:472.12px;top:129.01px;font-size:6.6px;line-height:6.6px;font-weight:normal;color:#fff;white-space:pre;transform:scaleX(0.918);transform-origin:50% 0;-webkit-text-stroke:0.1px #fff;">Auto Select</div>
<div style="position:absolute;left:520px;top:125.4px;width:73px;height:13.6px;background:#17649a;border-radius:2px"></div>
<div style="position:absolute;left:525.50px;top:129.01px;font-size:6.6px;line-height:6.6px;font-weight:normal;color:#fff;white-space:pre;transform:scaleX(0.879);transform-origin:50% 0;-webkit-text-stroke:0.1px #fff;">Process Suggestions</div>
<svg style="position:absolute;left:608.5px;top:129px" width="7" height="7" viewBox="0 0 7 7"><path d="M2.5 0H4.5V2.5H6L3.5 5L1 2.5H2.5Z" fill="#1f5f95"/><rect x="0.5" y="5.8" width="6" height="1" fill="#1f5f95"/></svg>
<svg style="position:absolute;left:626px;top:129px" width="8" height="8" viewBox="0 0 8 8"><circle cx="3.2" cy="3.2" r="2.3" fill="none" stroke="#1f5f95" stroke-width="1.2"/><path d="M4.8 4.8L7.3 7.3" stroke="#1f5f95" stroke-width="1.4"/></svg>
<svg style="position:absolute;left:644.8px;top:129px" width="7.5" height="7" viewBox="0 0 7.5 7"><path d="M0 0H6L7.5 1.5V7H0Z" fill="#1f5f95"/><rect x="1.5" y="0.6" width="3.5" height="1.8" fill="#d2dee4"/><circle cx="3.7" cy="4.8" r="1.1" fill="#d2dee4"/></svg>
<div style="position:absolute;left:664.1px;top:130.1px;width:1.25px;height:1.25px;background:#222"></div>
<div style="position:absolute;left:664.1px;top:132.45px;width:1.25px;height:1.25px;background:#222"></div>
<div style="position:absolute;left:664.1px;top:134.79999999999998px;width:1.25px;height:1.25px;background:#222"></div>
<div style="position:absolute;left:100.5px;top:145.6px;width:578.5px;height:1.2px;background:#b4d6df"></div>
<div style="position:absolute;left:684px;top:62.5px;width:1.2px;height:397.5px;background:#b3b9bd"></div>
<div style="position:absolute;left:101px;top:146.2px;width:573px;height:35.6px;background:#dfe6ea"></div>
<div style="position:absolute;left:100.5px;top:145.7px;width:578.5px;height:1.3px;background:#b3d5de"></div>
<div style="position:absolute;left:101px;top:163.6px;width:573px;height:0.8px;background:#c9d1d6"></div>
<div style="position:absolute;left:101px;top:181.2px;width:573px;height:0.8px;background:#c9d1d6"></div>
<div style="position:absolute;left:109.8px;top:146.8px;width:0.8px;height:17px;background:#cbd3d8"></div>
<div style="position:absolute;left:109.8px;top:164px;width:0.8px;height:17.8px;background:#d3dadf"></div>
<div style="position:absolute;left:146.79999999999998px;top:146.8px;width:0.8px;height:17px;background:#cbd3d8"></div>
<div style="position:absolute;left:146.79999999999998px;top:164px;width:0.8px;height:17.8px;background:#d3dadf"></div>
<div style="position:absolute;left:215.9px;top:146.8px;width:0.8px;height:17px;background:#cbd3d8"></div>
<div style="position:absolute;left:215.9px;top:164px;width:0.8px;height:17.8px;background:#d3dadf"></div>
<div style="position:absolute;left:307.40000000000003px;top:146.8px;width:0.8px;height:17px;background:#cbd3d8"></div>
<div style="position:absolute;left:307.40000000000003px;top:164px;width:0.8px;height:17.8px;background:#d3dadf"></div>
<div style="position:absolute;left:353.1px;top:146.8px;width:0.8px;height:17px;background:#cbd3d8"></div>
<div style="position:absolute;left:353.1px;top:164px;width:0.8px;height:17.8px;background:#d3dadf"></div>
<div style="position:absolute;left:399.20000000000005px;top:146.8px;width:0.8px;height:17px;background:#cbd3d8"></div>
<div style="position:absolute;left:399.20000000000005px;top:164px;width:0.8px;height:17.8px;background:#d3dadf"></div>
<div style="position:absolute;left:445.1px;top:146.8px;width:0.8px;height:17px;background:#cbd3d8"></div>
<div style="position:absolute;left:445.1px;top:164px;width:0.8px;height:17.8px;background:#d3dadf"></div>
<div style="position:absolute;left:490.3px;top:146.8px;width:0.8px;height:17px;background:#cbd3d8"></div>
<div style="position:absolute;left:490.3px;top:164px;width:0.8px;height:17.8px;background:#d3dadf"></div>
<div style="position:absolute;left:582.6px;top:146.8px;width:0.8px;height:17px;background:#cbd3d8"></div>
<div style="position:absolute;left:582.6px;top:164px;width:0.8px;height:17.8px;background:#d3dadf"></div>
<div style="position:absolute;left:110.00px;top:152.47px;font-size:7px;line-height:7px;font-weight:bold;color:#161616;white-space:pre;transform:scaleX(0.964);transform-origin:0 0;-webkit-text-stroke:0.15px #161616;">nit Pr...</div>
<div style="position:absolute;left:140.14999999999998px;top:152.2px;width:1.1px;height:1.2px;background:#444"></div>
<div style="position:absolute;left:140.14999999999998px;top:154.39999999999998px;width:1.1px;height:1.2px;background:#444"></div>
<div style="position:absolute;left:140.14999999999998px;top:156.6px;width:1.1px;height:1.2px;background:#444"></div>
<div style="position:absolute;left:151.10px;top:152.47px;font-size:7px;line-height:7px;font-weight:bold;color:#161616;white-space:pre;transform:scaleX(0.774);transform-origin:0 0;-webkit-text-stroke:0.15px #161616;">Part Class</div>
<div style="position:absolute;left:208.75px;top:152.2px;width:1.1px;height:1.2px;background:#444"></div>
<div style="position:absolute;left:208.75px;top:154.39999999999998px;width:1.1px;height:1.2px;background:#444"></div>
<div style="position:absolute;left:208.75px;top:156.6px;width:1.1px;height:1.2px;background:#444"></div>
<div style="position:absolute;left:219.70px;top:152.47px;font-size:7px;line-height:7px;font-weight:bold;color:#161616;white-space:pre;transform:scaleX(0.763);transform-origin:0 0;-webkit-text-stroke:0.15px #161616;">Job</div>
<div style="position:absolute;left:299.84999999999997px;top:152.2px;width:1.1px;height:1.2px;background:#444"></div>
<div style="position:absolute;left:299.84999999999997px;top:154.39999999999998px;width:1.1px;height:1.2px;background:#444"></div>
<div style="position:absolute;left:299.84999999999997px;top:156.6px;width:1.1px;height:1.2px;background:#444"></div>
<div style="position:absolute;left:311.30px;top:152.47px;font-size:7px;line-height:7px;font-weight:bold;color:#161616;white-space:pre;transform:scaleX(0.840);transform-origin:0 0;-webkit-text-stroke:0.15px #161616;">Requis...</div>
<div style="position:absolute;left:345.95px;top:152.2px;width:1.1px;height:1.2px;background:#444"></div>
<div style="position:absolute;left:345.95px;top:154.39999999999998px;width:1.1px;height:1.2px;background:#444"></div>
<div style="position:absolute;left:345.95px;top:156.6px;width:1.1px;height:1.2px;background:#444"></div>
<div style="position:absolute;left:356.70px;top:152.47px;font-size:7px;line-height:7px;font-weight:bold;color:#161616;white-space:pre;transform:scaleX(0.820);transform-origin:0 0;-webkit-text-stroke:0.15px #161616;">Order ...</div>
<div style="position:absolute;left:391.65px;top:152.2px;width:1.1px;height:1.2px;background:#444"></div>
<div style="position:absolute;left:391.65px;top:154.39999999999998px;width:1.1px;height:1.2px;background:#444"></div>
<div style="position:absolute;left:391.65px;top:156.6px;width:1.1px;height:1.2px;background:#444"></div>
<div style="position:absolute;left:402.60px;top:152.47px;font-size:7px;line-height:7px;font-weight:bold;color:#161616;white-space:pre;transform:scaleX(0.818);transform-origin:0 0;-webkit-text-stroke:0.15px #161616;">Site</div>
<div style="position:absolute;left:448.50px;top:152.47px;font-size:7px;line-height:7px;font-weight:bold;color:#161616;white-space:pre;transform:scaleX(0.832);transform-origin:0 0;-webkit-text-stroke:0.15px #161616;">Auto Select ...</div>
<div style="position:absolute;left:494.00px;top:152.47px;font-size:7px;line-height:7px;font-weight:bold;color:#161616;white-space:pre;transform:scaleX(0.747);transform-origin:0 0;-webkit-text-stroke:0.15px #161616;">Codigo CC</div>
<div style="position:absolute;left:574.45px;top:152.2px;width:1.1px;height:1.2px;background:#777"></div>
<div style="position:absolute;left:574.45px;top:154.39999999999998px;width:1.1px;height:1.2px;background:#777"></div>
<div style="position:absolute;left:574.45px;top:156.6px;width:1.1px;height:1.2px;background:#777"></div>
<div style="position:absolute;left:586.00px;top:152.47px;font-size:7px;line-height:7px;font-weight:bold;color:#161616;white-space:pre;transform:scaleX(0.780);transform-origin:0 0;-webkit-text-stroke:0.15px #161616;">Centro costos</div>
<div style="position:absolute;left:666.45px;top:152.2px;width:1.1px;height:1.2px;background:#444"></div>
<div style="position:absolute;left:666.45px;top:154.39999999999998px;width:1.1px;height:1.2px;background:#444"></div>
<div style="position:absolute;left:666.45px;top:156.6px;width:1.1px;height:1.2px;background:#444"></div>
<div style="position:absolute;left:106.1px;top:167px;width:24.700000000000017px;height:12.5px;background:#fff;border-bottom:1.2px solid #6aa6cc;box-sizing:border-box"></div>
<div style="position:absolute;left:133.9px;top:167.2px;width:9.8px;height:11.4px;background:#e4eaed;border-bottom:1.2px solid #6aa6cc;box-sizing:border-box"></div>
<svg style="position:absolute;left:136.3px;top:170.2px" width="5" height="5" viewBox="0 0 5 5"><path d="M0 0H5L3.1 2.2V4.8H1.9V2.2Z" fill="#333"/></svg>
<div style="position:absolute;left:219.7px;top:167px;width:73.10000000000002px;height:12.5px;background:#fff;border-bottom:1.2px solid #6aa6cc;box-sizing:border-box"></div>
<div style="position:absolute;left:295px;top:167.2px;width:9.8px;height:11.4px;background:#e4eaed;border-bottom:1.2px solid #6aa6cc;box-sizing:border-box"></div>
<svg style="position:absolute;left:297.4px;top:170.2px" width="5" height="5" viewBox="0 0 5 5"><path d="M0 0H5L3.1 2.2V4.8H1.9V2.2Z" fill="#333"/></svg>
<div style="position:absolute;left:312px;top:167px;width:24.80000000000001px;height:12.5px;background:#fff;border-bottom:1.2px solid #6aa6cc;box-sizing:border-box"></div>
<div style="position:absolute;left:339.6px;top:167.2px;width:9.8px;height:11.4px;background:#e4eaed;border-bottom:1.2px solid #6aa6cc;box-sizing:border-box"></div>
<svg style="position:absolute;left:342.0px;top:170.2px" width="5" height="5" viewBox="0 0 5 5"><path d="M0 0H5L3.1 2.2V4.8H1.9V2.2Z" fill="#333"/></svg>
<div style="position:absolute;left:357.9px;top:167px;width:24.5px;height:12.5px;background:#fff;border-bottom:1.2px solid #6aa6cc;box-sizing:border-box"></div>
<div style="position:absolute;left:385.2px;top:167.2px;width:9.8px;height:11.4px;background:#e4eaed;border-bottom:1.2px solid #6aa6cc;box-sizing:border-box"></div>
<svg style="position:absolute;left:387.59999999999997px;top:170.2px" width="5" height="5" viewBox="0 0 5 5"><path d="M0 0H5L3.1 2.2V4.8H1.9V2.2Z" fill="#333"/></svg>
<div style="position:absolute;left:493.7px;top:167px;width:74.59999999999997px;height:12.5px;background:#fff;border-bottom:1.2px solid #6aa6cc;box-sizing:border-box"></div>
<div style="position:absolute;left:569.8px;top:167.2px;width:9.8px;height:11.4px;background:#e4eaed;border-bottom:1.2px solid #6aa6cc;box-sizing:border-box"></div>
<svg style="position:absolute;left:572.1999999999999px;top:170.2px" width="5" height="5" viewBox="0 0 5 5"><path d="M0 0H5L3.1 2.2V4.8H1.9V2.2Z" fill="#333"/></svg>
<div style="position:absolute;left:585.4px;top:167px;width:74.10000000000002px;height:12.5px;background:#fff;border-bottom:1.2px solid #6aa6cc;box-sizing:border-box"></div>
<div style="position:absolute;left:660.8px;top:167.2px;width:9.8px;height:11.4px;background:#e4eaed;border-bottom:1.2px solid #6aa6cc;box-sizing:border-box"></div>
<svg style="position:absolute;left:663.1999999999999px;top:170.2px" width="5" height="5" viewBox="0 0 5 5"><path d="M0 0H5L3.1 2.2V4.8H1.9V2.2Z" fill="#333"/></svg>
<div style="position:absolute;left:150.7px;top:167px;width:61.4px;height:12.5px;background:#f1f3f4;border-bottom:1.2px solid #6aa6cc;box-sizing:border-box"></div>
<div style="position:absolute;left:155.00px;top:170.89px;font-size:5.8px;line-height:5.8px;font-weight:normal;color:#3c3c3c;white-space:pre;transform:scaleX(0.871);transform-origin:0 0;-webkit-text-stroke:0.18px #3c3c3c;">Select item</div>
<svg style="position:absolute;left:202.3px;top:171.6px" width="4.2" height="3" viewBox="0 0 5 3.5"><path d="M0 0H5L2.5 3.5Z" fill="#1f5f95"/></svg>
<div style="position:absolute;left:0;top:0;width:690px;height:474px;clip-path:inset(181.8px 16px 9px 101px)">
<div style="position:absolute;left:101px;top:181.6px;width:573px;height:11.02px;background:#ffffff"></div>
<div style="position:absolute;left:101px;top:191.82px;width:573px;height:0.8px;background:#dfe5e9"></div>
<div style="position:absolute;left:109.8px;top:181.6px;width:0.8px;height:11.02px;background:#dde3e7"></div>
<div style="position:absolute;left:146.79999999999998px;top:181.6px;width:0.8px;height:11.02px;background:#dde3e7"></div>
<div style="position:absolute;left:215.9px;top:181.6px;width:0.8px;height:11.02px;background:#dde3e7"></div>
<div style="position:absolute;left:307.40000000000003px;top:181.6px;width:0.8px;height:11.02px;background:#dde3e7"></div>
<div style="position:absolute;left:353.1px;top:181.6px;width:0.8px;height:11.02px;background:#dde3e7"></div>
<div style="position:absolute;left:399.20000000000005px;top:181.6px;width:0.8px;height:11.02px;background:#dde3e7"></div>
<div style="position:absolute;left:445.1px;top:181.6px;width:0.8px;height:11.02px;background:#dde3e7"></div>
<div style="position:absolute;left:490.3px;top:181.6px;width:0.8px;height:11.02px;background:#dde3e7"></div>
<div style="position:absolute;left:582.6px;top:181.6px;width:0.8px;height:11.02px;background:#dde3e7"></div>
<div style="position:absolute;left:119.32px;top:184.64px;font-size:6.8px;line-height:6.8px;font-weight:normal;color:#2a2a2a;white-space:pre;transform:scaleX(0.838);transform-origin:100% 0;-webkit-text-stroke:0.18px #2a2a2a;">0.00000</div>
<div style="position:absolute;left:151.10px;top:184.64px;font-size:6.8px;line-height:6.8px;font-weight:normal;color:#2a2a2a;white-space:pre;transform:scaleX(0.780);transform-origin:0 0;-webkit-text-stroke:0.18px #2a2a2a;">SERVICIO PARA PRO...</div>
<div style="position:absolute;left:330.99px;top:184.64px;font-size:6.8px;line-height:6.8px;font-weight:normal;color:#2a2a2a;white-space:pre;transform:scaleX(0.830);transform-origin:100% 0;-webkit-text-stroke:0.18px #2a2a2a;">40506</div>
<div style="position:absolute;left:391.92px;top:184.64px;font-size:6.8px;line-height:6.8px;font-weight:normal;color:#2a2a2a;white-space:pre;transform:scaleX(0.899);transform-origin:100% 0;-webkit-text-stroke:0.18px #2a2a2a;">0</div>
<svg style="position:absolute;left:402.8px;top:184.20px;opacity:.72" width="31" height="6"><use href="#mz0"/></svg>
<svg style="position:absolute;left:493.8px;top:184.20px;opacity:.85" width="21" height="6" viewBox="0 0 21 6" preserveAspectRatio="none"><use href="#mc0"/></svg>
<div style="position:absolute;left:586.00px;top:184.64px;font-size:6.8px;line-height:6.8px;font-weight:normal;color:#2a2a2a;white-space:pre;transform:scaleX(0.780);transform-origin:0 0;-webkit-text-stroke:0.18px #2a2a2a;">NO APLICA</div>
<div style="position:absolute;left:101px;top:192.62px;width:573px;height:11.02px;background:#fdf8da"></div>
<div style="position:absolute;left:101px;top:202.84px;width:573px;height:0.8px;background:#dfe5e9"></div>
<div style="position:absolute;left:109.8px;top:192.62px;width:0.8px;height:11.02px;background:#dde3e7"></div>
<div style="position:absolute;left:146.79999999999998px;top:192.62px;width:0.8px;height:11.02px;background:#dde3e7"></div>
<div style="position:absolute;left:215.9px;top:192.62px;width:0.8px;height:11.02px;background:#dde3e7"></div>
<div style="position:absolute;left:307.40000000000003px;top:192.62px;width:0.8px;height:11.02px;background:#dde3e7"></div>
<div style="position:absolute;left:353.1px;top:192.62px;width:0.8px;height:11.02px;background:#dde3e7"></div>
<div style="position:absolute;left:399.20000000000005px;top:192.62px;width:0.8px;height:11.02px;background:#dde3e7"></div>
<div style="position:absolute;left:445.1px;top:192.62px;width:0.8px;height:11.02px;background:#dde3e7"></div>
<div style="position:absolute;left:490.3px;top:192.62px;width:0.8px;height:11.02px;background:#dde3e7"></div>
<div style="position:absolute;left:582.6px;top:192.62px;width:0.8px;height:11.02px;background:#dde3e7"></div>
<div style="position:absolute;left:101px;top:203.64px;width:573px;height:11.02px;background:#ffffff"></div>
<div style="position:absolute;left:101px;top:213.85999999999999px;width:573px;height:0.8px;background:#dfe5e9"></div>
<div style="position:absolute;left:109.8px;top:203.64px;width:0.8px;height:11.02px;background:#dde3e7"></div>
<div style="position:absolute;left:146.79999999999998px;top:203.64px;width:0.8px;height:11.02px;background:#dde3e7"></div>
<div style="position:absolute;left:215.9px;top:203.64px;width:0.8px;height:11.02px;background:#dde3e7"></div>
<div style="position:absolute;left:307.40000000000003px;top:203.64px;width:0.8px;height:11.02px;background:#dde3e7"></div>
<div style="position:absolute;left:353.1px;top:203.64px;width:0.8px;height:11.02px;background:#dde3e7"></div>
<div style="position:absolute;left:399.20000000000005px;top:203.64px;width:0.8px;height:11.02px;background:#dde3e7"></div>
<div style="position:absolute;left:445.1px;top:203.64px;width:0.8px;height:11.02px;background:#dde3e7"></div>
<div style="position:absolute;left:490.3px;top:203.64px;width:0.8px;height:11.02px;background:#dde3e7"></div>
<div style="position:absolute;left:582.6px;top:203.64px;width:0.8px;height:11.02px;background:#dde3e7"></div>
<div style="position:absolute;left:119.32px;top:206.68px;font-size:6.8px;line-height:6.8px;font-weight:normal;color:#2a2a2a;white-space:pre;transform:scaleX(0.838);transform-origin:100% 0;-webkit-text-stroke:0.18px #2a2a2a;">0.00000</div>
<div style="position:absolute;left:151.10px;top:206.68px;font-size:6.8px;line-height:6.8px;font-weight:normal;color:#2a2a2a;white-space:pre;transform:scaleX(0.780);transform-origin:0 0;-webkit-text-stroke:0.18px #2a2a2a;">SERVICIOS VENTAS</div>
<div style="position:absolute;left:330.99px;top:206.68px;font-size:6.8px;line-height:6.8px;font-weight:normal;color:#2a2a2a;white-space:pre;transform:scaleX(0.830);transform-origin:100% 0;-webkit-text-stroke:0.18px #2a2a2a;">41452</div>
<div style="position:absolute;left:391.92px;top:206.68px;font-size:6.8px;line-height:6.8px;font-weight:normal;color:#2a2a2a;white-space:pre;transform:scaleX(0.899);transform-origin:100% 0;-webkit-text-stroke:0.18px #2a2a2a;">0</div>
<svg style="position:absolute;left:402.8px;top:206.24px;opacity:.72" width="31" height="6"><use href="#mz2"/></svg>
<svg style="position:absolute;left:493.8px;top:206.24px;opacity:.85" width="21" height="6" viewBox="0 0 21 6" preserveAspectRatio="none"><use href="#mc2"/></svg>
<div style="position:absolute;left:586.00px;top:206.68px;font-size:6.8px;line-height:6.8px;font-weight:normal;color:#2a2a2a;white-space:pre;transform:scaleX(0.780);transform-origin:0 0;-webkit-text-stroke:0.18px #2a2a2a;">TIENDA CALI 4 LA BASE</div>
<div style="position:absolute;left:101px;top:214.66px;width:573px;height:11.02px;background:#eef3f6"></div>
<div style="position:absolute;left:101px;top:224.88px;width:573px;height:0.8px;background:#dfe5e9"></div>
<div style="position:absolute;left:109.8px;top:214.66px;width:0.8px;height:11.02px;background:#dde3e7"></div>
<div style="position:absolute;left:146.79999999999998px;top:214.66px;width:0.8px;height:11.02px;background:#dde3e7"></div>
<div style="position:absolute;left:215.9px;top:214.66px;width:0.8px;height:11.02px;background:#dde3e7"></div>
<div style="position:absolute;left:307.40000000000003px;top:214.66px;width:0.8px;height:11.02px;background:#dde3e7"></div>
<div style="position:absolute;left:353.1px;top:214.66px;width:0.8px;height:11.02px;background:#dde3e7"></div>
<div style="position:absolute;left:399.20000000000005px;top:214.66px;width:0.8px;height:11.02px;background:#dde3e7"></div>
<div style="position:absolute;left:445.1px;top:214.66px;width:0.8px;height:11.02px;background:#dde3e7"></div>
<div style="position:absolute;left:490.3px;top:214.66px;width:0.8px;height:11.02px;background:#dde3e7"></div>
<div style="position:absolute;left:582.6px;top:214.66px;width:0.8px;height:11.02px;background:#dde3e7"></div>
<div style="position:absolute;left:119.32px;top:217.70px;font-size:6.8px;line-height:6.8px;font-weight:normal;color:#2a2a2a;white-space:pre;transform:scaleX(0.838);transform-origin:100% 0;-webkit-text-stroke:0.18px #2a2a2a;">0.00000</div>
<div style="position:absolute;left:151.10px;top:217.70px;font-size:6.8px;line-height:6.8px;font-weight:normal;color:#2a2a2a;white-space:pre;transform:scaleX(0.780);transform-origin:0 0;-webkit-text-stroke:0.18px #2a2a2a;">SERVICIOS VENTAS</div>
<div style="position:absolute;left:330.99px;top:217.70px;font-size:6.8px;line-height:6.8px;font-weight:normal;color:#2a2a2a;white-space:pre;transform:scaleX(0.830);transform-origin:100% 0;-webkit-text-stroke:0.18px #2a2a2a;">41533</div>
<div style="position:absolute;left:391.92px;top:217.70px;font-size:6.8px;line-height:6.8px;font-weight:normal;color:#2a2a2a;white-space:pre;transform:scaleX(0.899);transform-origin:100% 0;-webkit-text-stroke:0.18px #2a2a2a;">0</div>
<svg style="position:absolute;left:402.8px;top:217.26px;opacity:.72" width="31" height="6"><use href="#mz0"/></svg>
<svg style="position:absolute;left:493.8px;top:217.26px;opacity:.85" width="18" height="6" viewBox="0 0 18 6" preserveAspectRatio="none"><use href="#mc0"/></svg>
<div style="position:absolute;left:586.00px;top:217.70px;font-size:6.8px;line-height:6.8px;font-weight:normal;color:#2a2a2a;white-space:pre;transform:scaleX(0.780);transform-origin:0 0;-webkit-text-stroke:0.18px #2a2a2a;">TIENDA CALI 3 LA 52 NORTE</div>
<div style="position:absolute;left:101px;top:225.68px;width:573px;height:11.02px;background:#ffffff"></div>
<div style="position:absolute;left:101px;top:235.9px;width:573px;height:0.8px;background:#dfe5e9"></div>
<div style="position:absolute;left:109.8px;top:225.68px;width:0.8px;height:11.02px;background:#dde3e7"></div>
<div style="position:absolute;left:146.79999999999998px;top:225.68px;width:0.8px;height:11.02px;background:#dde3e7"></div>
<div style="position:absolute;left:215.9px;top:225.68px;width:0.8px;height:11.02px;background:#dde3e7"></div>
<div style="position:absolute;left:307.40000000000003px;top:225.68px;width:0.8px;height:11.02px;background:#dde3e7"></div>
<div style="position:absolute;left:353.1px;top:225.68px;width:0.8px;height:11.02px;background:#dde3e7"></div>
<div style="position:absolute;left:399.20000000000005px;top:225.68px;width:0.8px;height:11.02px;background:#dde3e7"></div>
<div style="position:absolute;left:445.1px;top:225.68px;width:0.8px;height:11.02px;background:#dde3e7"></div>
<div style="position:absolute;left:490.3px;top:225.68px;width:0.8px;height:11.02px;background:#dde3e7"></div>
<div style="position:absolute;left:582.6px;top:225.68px;width:0.8px;height:11.02px;background:#dde3e7"></div>
<div style="position:absolute;left:119.32px;top:228.72px;font-size:6.8px;line-height:6.8px;font-weight:normal;color:#2a2a2a;white-space:pre;transform:scaleX(0.838);transform-origin:100% 0;-webkit-text-stroke:0.18px #2a2a2a;">0.00000</div>
<div style="position:absolute;left:151.10px;top:228.72px;font-size:6.8px;line-height:6.8px;font-weight:normal;color:#2a2a2a;white-space:pre;transform:scaleX(0.780);transform-origin:0 0;-webkit-text-stroke:0.18px #2a2a2a;">SUMINISTROS</div>
<div style="position:absolute;left:330.99px;top:228.72px;font-size:6.8px;line-height:6.8px;font-weight:normal;color:#2a2a2a;white-space:pre;transform:scaleX(0.830);transform-origin:100% 0;-webkit-text-stroke:0.18px #2a2a2a;">41438</div>
<div style="position:absolute;left:391.92px;top:228.72px;font-size:6.8px;line-height:6.8px;font-weight:normal;color:#2a2a2a;white-space:pre;transform:scaleX(0.899);transform-origin:100% 0;-webkit-text-stroke:0.18px #2a2a2a;">0</div>
<svg style="position:absolute;left:402.8px;top:228.28px;opacity:.72" width="31" height="6"><use href="#mz1"/></svg>
<div style="position:absolute;left:586.00px;top:228.72px;font-size:6.8px;line-height:6.8px;font-weight:normal;color:#2a2a2a;white-space:pre;transform:scaleX(0.780);transform-origin:0 0;-webkit-text-stroke:0.18px #2a2a2a;">null</div>
<div style="position:absolute;left:101px;top:236.7px;width:573px;height:11.02px;background:#eef3f6"></div>
<div style="position:absolute;left:101px;top:246.92px;width:573px;height:0.8px;background:#dfe5e9"></div>
<div style="position:absolute;left:109.8px;top:236.7px;width:0.8px;height:11.02px;background:#dde3e7"></div>
<div style="position:absolute;left:146.79999999999998px;top:236.7px;width:0.8px;height:11.02px;background:#dde3e7"></div>
<div style="position:absolute;left:215.9px;top:236.7px;width:0.8px;height:11.02px;background:#dde3e7"></div>
<div style="position:absolute;left:307.40000000000003px;top:236.7px;width:0.8px;height:11.02px;background:#dde3e7"></div>
<div style="position:absolute;left:353.1px;top:236.7px;width:0.8px;height:11.02px;background:#dde3e7"></div>
<div style="position:absolute;left:399.20000000000005px;top:236.7px;width:0.8px;height:11.02px;background:#dde3e7"></div>
<div style="position:absolute;left:445.1px;top:236.7px;width:0.8px;height:11.02px;background:#dde3e7"></div>
<div style="position:absolute;left:490.3px;top:236.7px;width:0.8px;height:11.02px;background:#dde3e7"></div>
<div style="position:absolute;left:582.6px;top:236.7px;width:0.8px;height:11.02px;background:#dde3e7"></div>
<div style="position:absolute;left:119.32px;top:239.74px;font-size:6.8px;line-height:6.8px;font-weight:normal;color:#2a2a2a;white-space:pre;transform:scaleX(0.838);transform-origin:100% 0;-webkit-text-stroke:0.18px #2a2a2a;">0.00000</div>
<div style="position:absolute;left:151.10px;top:239.74px;font-size:6.8px;line-height:6.8px;font-weight:normal;color:#2a2a2a;white-space:pre;transform:scaleX(0.780);transform-origin:0 0;-webkit-text-stroke:0.18px #2a2a2a;">SERVICIO PARA PRO...</div>
<div style="position:absolute;left:330.99px;top:239.74px;font-size:6.8px;line-height:6.8px;font-weight:normal;color:#2a2a2a;white-space:pre;transform:scaleX(0.830);transform-origin:100% 0;-webkit-text-stroke:0.18px #2a2a2a;">41440</div>
<div style="position:absolute;left:391.92px;top:239.74px;font-size:6.8px;line-height:6.8px;font-weight:normal;color:#2a2a2a;white-space:pre;transform:scaleX(0.899);transform-origin:100% 0;-webkit-text-stroke:0.18px #2a2a2a;">0</div>
<svg style="position:absolute;left:402.8px;top:239.30px;opacity:.72" width="31" height="6"><use href="#mz2"/></svg>
<svg style="position:absolute;left:493.8px;top:239.30px;opacity:.85" width="18" height="6" viewBox="0 0 18 6" preserveAspectRatio="none"><use href="#mc2"/></svg>
<div style="position:absolute;left:586.00px;top:239.74px;font-size:6.8px;line-height:6.8px;font-weight:normal;color:#2a2a2a;white-space:pre;transform:scaleX(0.780);transform-origin:0 0;-webkit-text-stroke:0.18px #2a2a2a;">NO APLICA</div>
<div style="position:absolute;left:101px;top:247.72px;width:573px;height:11.02px;background:#ffffff"></div>
<div style="position:absolute;left:101px;top:257.94px;width:573px;height:0.8px;background:#dfe5e9"></div>
<div style="position:absolute;left:109.8px;top:247.72px;width:0.8px;height:11.02px;background:#dde3e7"></div>
<div style="position:absolute;left:146.79999999999998px;top:247.72px;width:0.8px;height:11.02px;background:#dde3e7"></div>
<div style="position:absolute;left:215.9px;top:247.72px;width:0.8px;height:11.02px;background:#dde3e7"></div>
<div style="position:absolute;left:307.40000000000003px;top:247.72px;width:0.8px;height:11.02px;background:#dde3e7"></div>
<div style="position:absolute;left:353.1px;top:247.72px;width:0.8px;height:11.02px;background:#dde3e7"></div>
<div style="position:absolute;left:399.20000000000005px;top:247.72px;width:0.8px;height:11.02px;background:#dde3e7"></div>
<div style="position:absolute;left:445.1px;top:247.72px;width:0.8px;height:11.02px;background:#dde3e7"></div>
<div style="position:absolute;left:490.3px;top:247.72px;width:0.8px;height:11.02px;background:#dde3e7"></div>
<div style="position:absolute;left:582.6px;top:247.72px;width:0.8px;height:11.02px;background:#dde3e7"></div>
<div style="position:absolute;left:119.32px;top:250.76px;font-size:6.8px;line-height:6.8px;font-weight:normal;color:#2a2a2a;white-space:pre;transform:scaleX(0.838);transform-origin:100% 0;-webkit-text-stroke:0.18px #2a2a2a;">0.00000</div>
<div style="position:absolute;left:151.10px;top:250.76px;font-size:6.8px;line-height:6.8px;font-weight:normal;color:#2a2a2a;white-space:pre;transform:scaleX(0.780);transform-origin:0 0;-webkit-text-stroke:0.18px #2a2a2a;">SERVICIOS VENTAS</div>
<div style="position:absolute;left:330.99px;top:250.76px;font-size:6.8px;line-height:6.8px;font-weight:normal;color:#2a2a2a;white-space:pre;transform:scaleX(0.830);transform-origin:100% 0;-webkit-text-stroke:0.18px #2a2a2a;">41636</div>
<div style="position:absolute;left:391.92px;top:250.76px;font-size:6.8px;line-height:6.8px;font-weight:normal;color:#2a2a2a;white-space:pre;transform:scaleX(0.899);transform-origin:100% 0;-webkit-text-stroke:0.18px #2a2a2a;">0</div>
<svg style="position:absolute;left:402.8px;top:250.32px;opacity:.72" width="31" height="6"><use href="#mz0"/></svg>
<svg style="position:absolute;left:493.8px;top:250.32px;opacity:.85" width="21" height="6" viewBox="0 0 21 6" preserveAspectRatio="none"><use href="#mc0"/></svg>
<div style="position:absolute;left:586.00px;top:250.76px;font-size:6.8px;line-height:6.8px;font-weight:normal;color:#2a2a2a;white-space:pre;transform:scaleX(0.780);transform-origin:0 0;-webkit-text-stroke:0.18px #2a2a2a;">TIENDA CALI 1 SUR</div>
<div style="position:absolute;left:101px;top:258.74px;width:573px;height:11.02px;background:#eef3f6"></div>
<div style="position:absolute;left:101px;top:268.96px;width:573px;height:0.8px;background:#dfe5e9"></div>
<div style="position:absolute;left:109.8px;top:258.74px;width:0.8px;height:11.02px;background:#dde3e7"></div>
<div style="position:absolute;left:146.79999999999998px;top:258.74px;width:0.8px;height:11.02px;background:#dde3e7"></div>
<div style="position:absolute;left:215.9px;top:258.74px;width:0.8px;height:11.02px;background:#dde3e7"></div>
<div style="position:absolute;left:307.40000000000003px;top:258.74px;width:0.8px;height:11.02px;background:#dde3e7"></div>
<div style="position:absolute;left:353.1px;top:258.74px;width:0.8px;height:11.02px;background:#dde3e7"></div>
<div style="position:absolute;left:399.20000000000005px;top:258.74px;width:0.8px;height:11.02px;background:#dde3e7"></div>
<div style="position:absolute;left:445.1px;top:258.74px;width:0.8px;height:11.02px;background:#dde3e7"></div>
<div style="position:absolute;left:490.3px;top:258.74px;width:0.8px;height:11.02px;background:#dde3e7"></div>
<div style="position:absolute;left:582.6px;top:258.74px;width:0.8px;height:11.02px;background:#dde3e7"></div>
<div style="position:absolute;left:119.32px;top:261.78px;font-size:6.8px;line-height:6.8px;font-weight:normal;color:#2a2a2a;white-space:pre;transform:scaleX(0.838);transform-origin:100% 0;-webkit-text-stroke:0.18px #2a2a2a;">0.00000</div>
<div style="position:absolute;left:151.10px;top:261.78px;font-size:6.8px;line-height:6.8px;font-weight:normal;color:#2a2a2a;white-space:pre;transform:scaleX(0.780);transform-origin:0 0;-webkit-text-stroke:0.18px #2a2a2a;">SERVICIOS VENTAS</div>
<div style="position:absolute;left:330.99px;top:261.78px;font-size:6.8px;line-height:6.8px;font-weight:normal;color:#2a2a2a;white-space:pre;transform:scaleX(0.830);transform-origin:100% 0;-webkit-text-stroke:0.18px #2a2a2a;">41663</div>
<div style="position:absolute;left:391.92px;top:261.78px;font-size:6.8px;line-height:6.8px;font-weight:normal;color:#2a2a2a;white-space:pre;transform:scaleX(0.899);transform-origin:100% 0;-webkit-text-stroke:0.18px #2a2a2a;">0</div>
<svg style="position:absolute;left:402.8px;top:261.34px;opacity:.72" width="31" height="6"><use href="#mz1"/></svg>
<svg style="position:absolute;left:493.8px;top:261.34px;opacity:.85" width="18" height="6" viewBox="0 0 18 6" preserveAspectRatio="none"><use href="#mc1"/></svg>
<div style="position:absolute;left:586.00px;top:261.78px;font-size:6.8px;line-height:6.8px;font-weight:normal;color:#2a2a2a;white-space:pre;transform:scaleX(0.780);transform-origin:0 0;-webkit-text-stroke:0.18px #2a2a2a;">TIENDA CALI 1 SUR</div>
<div style="position:absolute;left:101px;top:269.76px;width:573px;height:11.02px;background:#ffffff"></div>
<div style="position:absolute;left:101px;top:279.97999999999996px;width:573px;height:0.8px;background:#dfe5e9"></div>
<div style="position:absolute;left:109.8px;top:269.76px;width:0.8px;height:11.02px;background:#dde3e7"></div>
<div style="position:absolute;left:146.79999999999998px;top:269.76px;width:0.8px;height:11.02px;background:#dde3e7"></div>
<div style="position:absolute;left:215.9px;top:269.76px;width:0.8px;height:11.02px;background:#dde3e7"></div>
<div style="position:absolute;left:307.40000000000003px;top:269.76px;width:0.8px;height:11.02px;background:#dde3e7"></div>
<div style="position:absolute;left:353.1px;top:269.76px;width:0.8px;height:11.02px;background:#dde3e7"></div>
<div style="position:absolute;left:399.20000000000005px;top:269.76px;width:0.8px;height:11.02px;background:#dde3e7"></div>
<div style="position:absolute;left:445.1px;top:269.76px;width:0.8px;height:11.02px;background:#dde3e7"></div>
<div style="position:absolute;left:490.3px;top:269.76px;width:0.8px;height:11.02px;background:#dde3e7"></div>
<div style="position:absolute;left:582.6px;top:269.76px;width:0.8px;height:11.02px;background:#dde3e7"></div>
<div style="position:absolute;left:119.32px;top:272.80px;font-size:6.8px;line-height:6.8px;font-weight:normal;color:#2a2a2a;white-space:pre;transform:scaleX(0.838);transform-origin:100% 0;-webkit-text-stroke:0.18px #2a2a2a;">0.00000</div>
<div style="position:absolute;left:151.10px;top:272.80px;font-size:6.8px;line-height:6.8px;font-weight:normal;color:#2a2a2a;white-space:pre;transform:scaleX(0.780);transform-origin:0 0;-webkit-text-stroke:0.18px #2a2a2a;">SUMINISTROS</div>
<div style="position:absolute;left:330.99px;top:272.80px;font-size:6.8px;line-height:6.8px;font-weight:normal;color:#2a2a2a;white-space:pre;transform:scaleX(0.830);transform-origin:100% 0;-webkit-text-stroke:0.18px #2a2a2a;">41803</div>
<div style="position:absolute;left:391.92px;top:272.80px;font-size:6.8px;line-height:6.8px;font-weight:normal;color:#2a2a2a;white-space:pre;transform:scaleX(0.899);transform-origin:100% 0;-webkit-text-stroke:0.18px #2a2a2a;">0</div>
<svg style="position:absolute;left:402.8px;top:272.36px;opacity:.72" width="31" height="6"><use href="#mz2"/></svg>
<div style="position:absolute;left:586.00px;top:272.80px;font-size:6.8px;line-height:6.8px;font-weight:normal;color:#2a2a2a;white-space:pre;transform:scaleX(0.780);transform-origin:0 0;-webkit-text-stroke:0.18px #2a2a2a;">null</div>
<div style="position:absolute;left:101px;top:280.78px;width:573px;height:11.02px;background:#eef3f6"></div>
<div style="position:absolute;left:101px;top:290.99999999999994px;width:573px;height:0.8px;background:#dfe5e9"></div>
<div style="position:absolute;left:109.8px;top:280.78px;width:0.8px;height:11.02px;background:#dde3e7"></div>
<div style="position:absolute;left:146.79999999999998px;top:280.78px;width:0.8px;height:11.02px;background:#dde3e7"></div>
<div style="position:absolute;left:215.9px;top:280.78px;width:0.8px;height:11.02px;background:#dde3e7"></div>
<div style="position:absolute;left:307.40000000000003px;top:280.78px;width:0.8px;height:11.02px;background:#dde3e7"></div>
<div style="position:absolute;left:353.1px;top:280.78px;width:0.8px;height:11.02px;background:#dde3e7"></div>
<div style="position:absolute;left:399.20000000000005px;top:280.78px;width:0.8px;height:11.02px;background:#dde3e7"></div>
<div style="position:absolute;left:445.1px;top:280.78px;width:0.8px;height:11.02px;background:#dde3e7"></div>
<div style="position:absolute;left:490.3px;top:280.78px;width:0.8px;height:11.02px;background:#dde3e7"></div>
<div style="position:absolute;left:582.6px;top:280.78px;width:0.8px;height:11.02px;background:#dde3e7"></div>
<div style="position:absolute;left:119.32px;top:283.82px;font-size:6.8px;line-height:6.8px;font-weight:normal;color:#2a2a2a;white-space:pre;transform:scaleX(0.838);transform-origin:100% 0;-webkit-text-stroke:0.18px #2a2a2a;">0.00000</div>
<div style="position:absolute;left:151.10px;top:283.82px;font-size:6.8px;line-height:6.8px;font-weight:normal;color:#2a2a2a;white-space:pre;transform:scaleX(0.780);transform-origin:0 0;-webkit-text-stroke:0.18px #2a2a2a;">SERV MTO MAQ INYE...</div>
<div style="position:absolute;left:330.99px;top:283.82px;font-size:6.8px;line-height:6.8px;font-weight:normal;color:#2a2a2a;white-space:pre;transform:scaleX(0.830);transform-origin:100% 0;-webkit-text-stroke:0.18px #2a2a2a;">41693</div>
<div style="position:absolute;left:391.92px;top:283.82px;font-size:6.8px;line-height:6.8px;font-weight:normal;color:#2a2a2a;white-space:pre;transform:scaleX(0.899);transform-origin:100% 0;-webkit-text-stroke:0.18px #2a2a2a;">0</div>
<svg style="position:absolute;left:402.8px;top:283.38px;opacity:.72" width="31" height="6"><use href="#mz0"/></svg>
<svg style="position:absolute;left:493.8px;top:283.38px;opacity:.85" width="18" height="6" viewBox="0 0 18 6" preserveAspectRatio="none"><use href="#mc0"/></svg>
<div style="position:absolute;left:586.00px;top:283.82px;font-size:6.8px;line-height:6.8px;font-weight:normal;color:#2a2a2a;white-space:pre;transform:scaleX(0.780);transform-origin:0 0;-webkit-text-stroke:0.18px #2a2a2a;">ENSAMBLE</div>
<div style="position:absolute;left:101px;top:291.79999999999995px;width:573px;height:11.02px;background:#ffffff"></div>
<div style="position:absolute;left:101px;top:302.0199999999999px;width:573px;height:0.8px;background:#dfe5e9"></div>
<div style="position:absolute;left:109.8px;top:291.79999999999995px;width:0.8px;height:11.02px;background:#dde3e7"></div>
<div style="position:absolute;left:146.79999999999998px;top:291.79999999999995px;width:0.8px;height:11.02px;background:#dde3e7"></div>
<div style="position:absolute;left:215.9px;top:291.79999999999995px;width:0.8px;height:11.02px;background:#dde3e7"></div>
<div style="position:absolute;left:307.40000000000003px;top:291.79999999999995px;width:0.8px;height:11.02px;background:#dde3e7"></div>
<div style="position:absolute;left:353.1px;top:291.79999999999995px;width:0.8px;height:11.02px;background:#dde3e7"></div>
<div style="position:absolute;left:399.20000000000005px;top:291.79999999999995px;width:0.8px;height:11.02px;background:#dde3e7"></div>
<div style="position:absolute;left:445.1px;top:291.79999999999995px;width:0.8px;height:11.02px;background:#dde3e7"></div>
<div style="position:absolute;left:490.3px;top:291.79999999999995px;width:0.8px;height:11.02px;background:#dde3e7"></div>
<div style="position:absolute;left:582.6px;top:291.79999999999995px;width:0.8px;height:11.02px;background:#dde3e7"></div>
<div style="position:absolute;left:119.32px;top:294.84px;font-size:6.8px;line-height:6.8px;font-weight:normal;color:#2a2a2a;white-space:pre;transform:scaleX(0.838);transform-origin:100% 0;-webkit-text-stroke:0.18px #2a2a2a;">0.00000</div>
<div style="position:absolute;left:151.10px;top:294.84px;font-size:6.8px;line-height:6.8px;font-weight:normal;color:#2a2a2a;white-space:pre;transform:scaleX(0.780);transform-origin:0 0;-webkit-text-stroke:0.18px #2a2a2a;">SERVICIOS VENTAS</div>
<div style="position:absolute;left:330.99px;top:294.84px;font-size:6.8px;line-height:6.8px;font-weight:normal;color:#2a2a2a;white-space:pre;transform:scaleX(0.830);transform-origin:100% 0;-webkit-text-stroke:0.18px #2a2a2a;">41685</div>
<div style="position:absolute;left:391.92px;top:294.84px;font-size:6.8px;line-height:6.8px;font-weight:normal;color:#2a2a2a;white-space:pre;transform:scaleX(0.899);transform-origin:100% 0;-webkit-text-stroke:0.18px #2a2a2a;">0</div>
<svg style="position:absolute;left:402.8px;top:294.40px;opacity:.72" width="31" height="6"><use href="#mz1"/></svg>
<svg style="position:absolute;left:493.8px;top:294.40px;opacity:.85" width="21" height="6" viewBox="0 0 21 6" preserveAspectRatio="none"><use href="#mc1"/></svg>
<div style="position:absolute;left:586.00px;top:294.84px;font-size:6.8px;line-height:6.8px;font-weight:normal;color:#2a2a2a;white-space:pre;transform:scaleX(0.780);transform-origin:0 0;-webkit-text-stroke:0.18px #2a2a2a;">TIENDA PALMIRA</div>
<div style="position:absolute;left:101px;top:302.82px;width:573px;height:11.02px;background:#fdf8da"></div>
<div style="position:absolute;left:101px;top:313.03999999999996px;width:573px;height:0.8px;background:#dfe5e9"></div>
<div style="position:absolute;left:109.8px;top:302.82px;width:0.8px;height:11.02px;background:#dde3e7"></div>
<div style="position:absolute;left:146.79999999999998px;top:302.82px;width:0.8px;height:11.02px;background:#dde3e7"></div>
<div style="position:absolute;left:215.9px;top:302.82px;width:0.8px;height:11.02px;background:#dde3e7"></div>
<div style="position:absolute;left:307.40000000000003px;top:302.82px;width:0.8px;height:11.02px;background:#dde3e7"></div>
<div style="position:absolute;left:353.1px;top:302.82px;width:0.8px;height:11.02px;background:#dde3e7"></div>
<div style="position:absolute;left:399.20000000000005px;top:302.82px;width:0.8px;height:11.02px;background:#dde3e7"></div>
<div style="position:absolute;left:445.1px;top:302.82px;width:0.8px;height:11.02px;background:#dde3e7"></div>
<div style="position:absolute;left:490.3px;top:302.82px;width:0.8px;height:11.02px;background:#dde3e7"></div>
<div style="position:absolute;left:582.6px;top:302.82px;width:0.8px;height:11.02px;background:#dde3e7"></div>
<div style="position:absolute;left:119.32px;top:305.86px;font-size:6.8px;line-height:6.8px;font-weight:normal;color:#2a2a2a;white-space:pre;transform:scaleX(0.838);transform-origin:100% 0;-webkit-text-stroke:0.18px #2a2a2a;">0.00000</div>
<div style="position:absolute;left:151.10px;top:305.86px;font-size:6.8px;line-height:6.8px;font-weight:normal;color:#2a2a2a;white-space:pre;transform:scaleX(0.780);transform-origin:0 0;-webkit-text-stroke:0.18px #2a2a2a;">SUMINISTROS</div>
<div style="position:absolute;left:330.99px;top:305.86px;font-size:6.8px;line-height:6.8px;font-weight:normal;color:#2a2a2a;white-space:pre;transform:scaleX(0.830);transform-origin:100% 0;-webkit-text-stroke:0.18px #2a2a2a;">41640</div>
<div style="position:absolute;left:391.92px;top:305.86px;font-size:6.8px;line-height:6.8px;font-weight:normal;color:#2a2a2a;white-space:pre;transform:scaleX(0.899);transform-origin:100% 0;-webkit-text-stroke:0.18px #2a2a2a;">0</div>
<svg style="position:absolute;left:402.8px;top:305.42px;opacity:.72" width="31" height="6"><use href="#mz2"/></svg>
<div style="position:absolute;left:586.00px;top:305.86px;font-size:6.8px;line-height:6.8px;font-weight:normal;color:#2a2a2a;white-space:pre;transform:scaleX(0.780);transform-origin:0 0;-webkit-text-stroke:0.18px #2a2a2a;">null</div>
<div style="position:absolute;left:101px;top:313.84000000000003px;width:573px;height:11.02px;background:#ffffff"></div>
<div style="position:absolute;left:101px;top:324.06px;width:573px;height:0.8px;background:#dfe5e9"></div>
<div style="position:absolute;left:109.8px;top:313.84000000000003px;width:0.8px;height:11.02px;background:#dde3e7"></div>
<div style="position:absolute;left:146.79999999999998px;top:313.84000000000003px;width:0.8px;height:11.02px;background:#dde3e7"></div>
<div style="position:absolute;left:215.9px;top:313.84000000000003px;width:0.8px;height:11.02px;background:#dde3e7"></div>
<div style="position:absolute;left:307.40000000000003px;top:313.84000000000003px;width:0.8px;height:11.02px;background:#dde3e7"></div>
<div style="position:absolute;left:353.1px;top:313.84000000000003px;width:0.8px;height:11.02px;background:#dde3e7"></div>
<div style="position:absolute;left:399.20000000000005px;top:313.84000000000003px;width:0.8px;height:11.02px;background:#dde3e7"></div>
<div style="position:absolute;left:445.1px;top:313.84000000000003px;width:0.8px;height:11.02px;background:#dde3e7"></div>
<div style="position:absolute;left:490.3px;top:313.84000000000003px;width:0.8px;height:11.02px;background:#dde3e7"></div>
<div style="position:absolute;left:582.6px;top:313.84000000000003px;width:0.8px;height:11.02px;background:#dde3e7"></div>
<div style="position:absolute;left:119.32px;top:316.88px;font-size:6.8px;line-height:6.8px;font-weight:normal;color:#2a2a2a;white-space:pre;transform:scaleX(0.838);transform-origin:100% 0;-webkit-text-stroke:0.18px #2a2a2a;">0.00000</div>
<div style="position:absolute;left:151.10px;top:316.88px;font-size:6.8px;line-height:6.8px;font-weight:normal;color:#2a2a2a;white-space:pre;transform:scaleX(0.780);transform-origin:0 0;-webkit-text-stroke:0.18px #2a2a2a;">SERVICIOS GENERAL...</div>
<div style="position:absolute;left:330.99px;top:316.88px;font-size:6.8px;line-height:6.8px;font-weight:normal;color:#2a2a2a;white-space:pre;transform:scaleX(0.830);transform-origin:100% 0;-webkit-text-stroke:0.18px #2a2a2a;">41723</div>
<div style="position:absolute;left:391.92px;top:316.88px;font-size:6.8px;line-height:6.8px;font-weight:normal;color:#2a2a2a;white-space:pre;transform:scaleX(0.899);transform-origin:100% 0;-webkit-text-stroke:0.18px #2a2a2a;">0</div>
<svg style="position:absolute;left:402.8px;top:316.44px;opacity:.72" width="31" height="6"><use href="#mz0"/></svg>
<svg style="position:absolute;left:493.8px;top:316.44px;opacity:.85" width="21" height="6" viewBox="0 0 21 6" preserveAspectRatio="none"><use href="#mc0"/></svg>
<div style="position:absolute;left:586.00px;top:316.88px;font-size:6.8px;line-height:6.8px;font-weight:normal;color:#2a2a2a;white-space:pre;transform:scaleX(0.780);transform-origin:0 0;-webkit-text-stroke:0.18px #2a2a2a;">VIGILANCIA</div>
<div style="position:absolute;left:101px;top:324.86px;width:573px;height:11.02px;background:#eef3f6"></div>
<div style="position:absolute;left:101px;top:335.08px;width:573px;height:0.8px;background:#dfe5e9"></div>
<div style="position:absolute;left:109.8px;top:324.86px;width:0.8px;height:11.02px;background:#dde3e7"></div>
<div style="position:absolute;left:146.79999999999998px;top:324.86px;width:0.8px;height:11.02px;background:#dde3e7"></div>
<div style="position:absolute;left:215.9px;top:324.86px;width:0.8px;height:11.02px;background:#dde3e7"></div>
<div style="position:absolute;left:307.40000000000003px;top:324.86px;width:0.8px;height:11.02px;background:#dde3e7"></div>
<div style="position:absolute;left:353.1px;top:324.86px;width:0.8px;height:11.02px;background:#dde3e7"></div>
<div style="position:absolute;left:399.20000000000005px;top:324.86px;width:0.8px;height:11.02px;background:#dde3e7"></div>
<div style="position:absolute;left:445.1px;top:324.86px;width:0.8px;height:11.02px;background:#dde3e7"></div>
<div style="position:absolute;left:490.3px;top:324.86px;width:0.8px;height:11.02px;background:#dde3e7"></div>
<div style="position:absolute;left:582.6px;top:324.86px;width:0.8px;height:11.02px;background:#dde3e7"></div>
<div style="position:absolute;left:119.32px;top:327.90px;font-size:6.8px;line-height:6.8px;font-weight:normal;color:#2a2a2a;white-space:pre;transform:scaleX(0.838);transform-origin:100% 0;-webkit-text-stroke:0.18px #2a2a2a;">0.00000</div>
<div style="position:absolute;left:151.10px;top:327.90px;font-size:6.8px;line-height:6.8px;font-weight:normal;color:#2a2a2a;white-space:pre;transform:scaleX(0.780);transform-origin:0 0;-webkit-text-stroke:0.18px #2a2a2a;">SUMINISTROS</div>
<div style="position:absolute;left:330.99px;top:327.90px;font-size:6.8px;line-height:6.8px;font-weight:normal;color:#2a2a2a;white-space:pre;transform:scaleX(0.830);transform-origin:100% 0;-webkit-text-stroke:0.18px #2a2a2a;">41803</div>
<div style="position:absolute;left:391.92px;top:327.90px;font-size:6.8px;line-height:6.8px;font-weight:normal;color:#2a2a2a;white-space:pre;transform:scaleX(0.899);transform-origin:100% 0;-webkit-text-stroke:0.18px #2a2a2a;">0</div>
<svg style="position:absolute;left:402.8px;top:327.46px;opacity:.72" width="31" height="6"><use href="#mz1"/></svg>
<div style="position:absolute;left:586.00px;top:327.90px;font-size:6.8px;line-height:6.8px;font-weight:normal;color:#2a2a2a;white-space:pre;transform:scaleX(0.780);transform-origin:0 0;-webkit-text-stroke:0.18px #2a2a2a;">null</div>
<div style="position:absolute;left:101px;top:335.88px;width:573px;height:11.02px;background:#ffffff"></div>
<div style="position:absolute;left:101px;top:346.09999999999997px;width:573px;height:0.8px;background:#dfe5e9"></div>
<div style="position:absolute;left:109.8px;top:335.88px;width:0.8px;height:11.02px;background:#dde3e7"></div>
<div style="position:absolute;left:146.79999999999998px;top:335.88px;width:0.8px;height:11.02px;background:#dde3e7"></div>
<div style="position:absolute;left:215.9px;top:335.88px;width:0.8px;height:11.02px;background:#dde3e7"></div>
<div style="position:absolute;left:307.40000000000003px;top:335.88px;width:0.8px;height:11.02px;background:#dde3e7"></div>
<div style="position:absolute;left:353.1px;top:335.88px;width:0.8px;height:11.02px;background:#dde3e7"></div>
<div style="position:absolute;left:399.20000000000005px;top:335.88px;width:0.8px;height:11.02px;background:#dde3e7"></div>
<div style="position:absolute;left:445.1px;top:335.88px;width:0.8px;height:11.02px;background:#dde3e7"></div>
<div style="position:absolute;left:490.3px;top:335.88px;width:0.8px;height:11.02px;background:#dde3e7"></div>
<div style="position:absolute;left:582.6px;top:335.88px;width:0.8px;height:11.02px;background:#dde3e7"></div>
<div style="position:absolute;left:119.32px;top:338.92px;font-size:6.8px;line-height:6.8px;font-weight:normal;color:#2a2a2a;white-space:pre;transform:scaleX(0.838);transform-origin:100% 0;-webkit-text-stroke:0.18px #2a2a2a;">0.00000</div>
<div style="position:absolute;left:151.10px;top:338.92px;font-size:6.8px;line-height:6.8px;font-weight:normal;color:#2a2a2a;white-space:pre;transform:scaleX(0.780);transform-origin:0 0;-webkit-text-stroke:0.18px #2a2a2a;">MATERIALES Y REPU...</div>
<div style="position:absolute;left:330.99px;top:338.92px;font-size:6.8px;line-height:6.8px;font-weight:normal;color:#2a2a2a;white-space:pre;transform:scaleX(0.830);transform-origin:100% 0;-webkit-text-stroke:0.18px #2a2a2a;">41818</div>
<div style="position:absolute;left:391.92px;top:338.92px;font-size:6.8px;line-height:6.8px;font-weight:normal;color:#2a2a2a;white-space:pre;transform:scaleX(0.899);transform-origin:100% 0;-webkit-text-stroke:0.18px #2a2a2a;">0</div>
<svg style="position:absolute;left:402.8px;top:338.48px;opacity:.72" width="31" height="6"><use href="#mz2"/></svg>
<div style="position:absolute;left:586.00px;top:338.92px;font-size:6.8px;line-height:6.8px;font-weight:normal;color:#2a2a2a;white-space:pre;transform:scaleX(0.780);transform-origin:0 0;-webkit-text-stroke:0.18px #2a2a2a;">null</div>
<div style="position:absolute;left:101px;top:346.9px;width:573px;height:11.02px;background:#eef3f6"></div>
<div style="position:absolute;left:101px;top:357.11999999999995px;width:573px;height:0.8px;background:#dfe5e9"></div>
<div style="position:absolute;left:109.8px;top:346.9px;width:0.8px;height:11.02px;background:#dde3e7"></div>
<div style="position:absolute;left:146.79999999999998px;top:346.9px;width:0.8px;height:11.02px;background:#dde3e7"></div>
<div style="position:absolute;left:215.9px;top:346.9px;width:0.8px;height:11.02px;background:#dde3e7"></div>
<div style="position:absolute;left:307.40000000000003px;top:346.9px;width:0.8px;height:11.02px;background:#dde3e7"></div>
<div style="position:absolute;left:353.1px;top:346.9px;width:0.8px;height:11.02px;background:#dde3e7"></div>
<div style="position:absolute;left:399.20000000000005px;top:346.9px;width:0.8px;height:11.02px;background:#dde3e7"></div>
<div style="position:absolute;left:445.1px;top:346.9px;width:0.8px;height:11.02px;background:#dde3e7"></div>
<div style="position:absolute;left:490.3px;top:346.9px;width:0.8px;height:11.02px;background:#dde3e7"></div>
<div style="position:absolute;left:582.6px;top:346.9px;width:0.8px;height:11.02px;background:#dde3e7"></div>
<div style="position:absolute;left:119.32px;top:349.94px;font-size:6.8px;line-height:6.8px;font-weight:normal;color:#2a2a2a;white-space:pre;transform:scaleX(0.838);transform-origin:100% 0;-webkit-text-stroke:0.18px #2a2a2a;">0.00000</div>
<div style="position:absolute;left:151.10px;top:349.94px;font-size:6.8px;line-height:6.8px;font-weight:normal;color:#2a2a2a;white-space:pre;transform:scaleX(0.780);transform-origin:0 0;-webkit-text-stroke:0.18px #2a2a2a;">MATERIALES Y REPU...</div>
<div style="position:absolute;left:330.99px;top:349.94px;font-size:6.8px;line-height:6.8px;font-weight:normal;color:#2a2a2a;white-space:pre;transform:scaleX(0.830);transform-origin:100% 0;-webkit-text-stroke:0.18px #2a2a2a;">41818</div>
<div style="position:absolute;left:391.92px;top:349.94px;font-size:6.8px;line-height:6.8px;font-weight:normal;color:#2a2a2a;white-space:pre;transform:scaleX(0.899);transform-origin:100% 0;-webkit-text-stroke:0.18px #2a2a2a;">0</div>
<svg style="position:absolute;left:402.8px;top:349.50px;opacity:.72" width="31" height="6"><use href="#mz0"/></svg>
<div style="position:absolute;left:586.00px;top:349.94px;font-size:6.8px;line-height:6.8px;font-weight:normal;color:#2a2a2a;white-space:pre;transform:scaleX(0.780);transform-origin:0 0;-webkit-text-stroke:0.18px #2a2a2a;">null</div>
<div style="position:absolute;left:101px;top:357.91999999999996px;width:573px;height:11.02px;background:#ffffff"></div>
<div style="position:absolute;left:101px;top:368.13999999999993px;width:573px;height:0.8px;background:#dfe5e9"></div>
<div style="position:absolute;left:109.8px;top:357.91999999999996px;width:0.8px;height:11.02px;background:#dde3e7"></div>
<div style="position:absolute;left:146.79999999999998px;top:357.91999999999996px;width:0.8px;height:11.02px;background:#dde3e7"></div>
<div style="position:absolute;left:215.9px;top:357.91999999999996px;width:0.8px;height:11.02px;background:#dde3e7"></div>
<div style="position:absolute;left:307.40000000000003px;top:357.91999999999996px;width:0.8px;height:11.02px;background:#dde3e7"></div>
<div style="position:absolute;left:353.1px;top:357.91999999999996px;width:0.8px;height:11.02px;background:#dde3e7"></div>
<div style="position:absolute;left:399.20000000000005px;top:357.91999999999996px;width:0.8px;height:11.02px;background:#dde3e7"></div>
<div style="position:absolute;left:445.1px;top:357.91999999999996px;width:0.8px;height:11.02px;background:#dde3e7"></div>
<div style="position:absolute;left:490.3px;top:357.91999999999996px;width:0.8px;height:11.02px;background:#dde3e7"></div>
<div style="position:absolute;left:582.6px;top:357.91999999999996px;width:0.8px;height:11.02px;background:#dde3e7"></div>
<div style="position:absolute;left:119.32px;top:360.96px;font-size:6.8px;line-height:6.8px;font-weight:normal;color:#2a2a2a;white-space:pre;transform:scaleX(0.838);transform-origin:100% 0;-webkit-text-stroke:0.18px #2a2a2a;">0.00000</div>
<div style="position:absolute;left:151.10px;top:360.96px;font-size:6.8px;line-height:6.8px;font-weight:normal;color:#2a2a2a;white-space:pre;transform:scaleX(0.780);transform-origin:0 0;-webkit-text-stroke:0.18px #2a2a2a;">SUMINISTROS</div>
<div style="position:absolute;left:330.99px;top:360.96px;font-size:6.8px;line-height:6.8px;font-weight:normal;color:#2a2a2a;white-space:pre;transform:scaleX(0.830);transform-origin:100% 0;-webkit-text-stroke:0.18px #2a2a2a;">41803</div>
<div style="position:absolute;left:391.92px;top:360.96px;font-size:6.8px;line-height:6.8px;font-weight:normal;color:#2a2a2a;white-space:pre;transform:scaleX(0.899);transform-origin:100% 0;-webkit-text-stroke:0.18px #2a2a2a;">0</div>
<svg style="position:absolute;left:402.8px;top:360.52px;opacity:.72" width="31" height="6"><use href="#mz1"/></svg>
<div style="position:absolute;left:586.00px;top:360.96px;font-size:6.8px;line-height:6.8px;font-weight:normal;color:#2a2a2a;white-space:pre;transform:scaleX(0.780);transform-origin:0 0;-webkit-text-stroke:0.18px #2a2a2a;">null</div>
<div style="position:absolute;left:101px;top:368.94px;width:573px;height:11.02px;background:#eef3f6"></div>
<div style="position:absolute;left:101px;top:379.15999999999997px;width:573px;height:0.8px;background:#dfe5e9"></div>
<div style="position:absolute;left:109.8px;top:368.94px;width:0.8px;height:11.02px;background:#dde3e7"></div>
<div style="position:absolute;left:146.79999999999998px;top:368.94px;width:0.8px;height:11.02px;background:#dde3e7"></div>
<div style="position:absolute;left:215.9px;top:368.94px;width:0.8px;height:11.02px;background:#dde3e7"></div>
<div style="position:absolute;left:307.40000000000003px;top:368.94px;width:0.8px;height:11.02px;background:#dde3e7"></div>
<div style="position:absolute;left:353.1px;top:368.94px;width:0.8px;height:11.02px;background:#dde3e7"></div>
<div style="position:absolute;left:399.20000000000005px;top:368.94px;width:0.8px;height:11.02px;background:#dde3e7"></div>
<div style="position:absolute;left:445.1px;top:368.94px;width:0.8px;height:11.02px;background:#dde3e7"></div>
<div style="position:absolute;left:490.3px;top:368.94px;width:0.8px;height:11.02px;background:#dde3e7"></div>
<div style="position:absolute;left:582.6px;top:368.94px;width:0.8px;height:11.02px;background:#dde3e7"></div>
<div style="position:absolute;left:119.32px;top:371.98px;font-size:6.8px;line-height:6.8px;font-weight:normal;color:#2a2a2a;white-space:pre;transform:scaleX(0.838);transform-origin:100% 0;-webkit-text-stroke:0.18px #2a2a2a;">0.00000</div>
<div style="position:absolute;left:151.10px;top:371.98px;font-size:6.8px;line-height:6.8px;font-weight:normal;color:#2a2a2a;white-space:pre;transform:scaleX(0.780);transform-origin:0 0;-webkit-text-stroke:0.18px #2a2a2a;">SERV MTO MAQ INYE...</div>
<div style="position:absolute;left:330.99px;top:371.98px;font-size:6.8px;line-height:6.8px;font-weight:normal;color:#2a2a2a;white-space:pre;transform:scaleX(0.830);transform-origin:100% 0;-webkit-text-stroke:0.18px #2a2a2a;">41756</div>
<div style="position:absolute;left:391.92px;top:371.98px;font-size:6.8px;line-height:6.8px;font-weight:normal;color:#2a2a2a;white-space:pre;transform:scaleX(0.899);transform-origin:100% 0;-webkit-text-stroke:0.18px #2a2a2a;">0</div>
<svg style="position:absolute;left:402.8px;top:371.54px;opacity:.72" width="31" height="6"><use href="#mz2"/></svg>
<svg style="position:absolute;left:493.8px;top:371.54px;opacity:.85" width="25" height="6" viewBox="0 0 25 6" preserveAspectRatio="none"><use href="#mc2"/></svg>
<div style="position:absolute;left:586.00px;top:371.98px;font-size:6.8px;line-height:6.8px;font-weight:normal;color:#2a2a2a;white-space:pre;transform:scaleX(0.780);transform-origin:0 0;-webkit-text-stroke:0.18px #2a2a2a;">GASTOS GENERALES TALLER</div>
<div style="position:absolute;left:101px;top:379.96px;width:573px;height:11.02px;background:#ffffff"></div>
<div style="position:absolute;left:101px;top:390.17999999999995px;width:573px;height:0.8px;background:#dfe5e9"></div>
<div style="position:absolute;left:109.8px;top:379.96px;width:0.8px;height:11.02px;background:#dde3e7"></div>
<div style="position:absolute;left:146.79999999999998px;top:379.96px;width:0.8px;height:11.02px;background:#dde3e7"></div>
<div style="position:absolute;left:215.9px;top:379.96px;width:0.8px;height:11.02px;background:#dde3e7"></div>
<div style="position:absolute;left:307.40000000000003px;top:379.96px;width:0.8px;height:11.02px;background:#dde3e7"></div>
<div style="position:absolute;left:353.1px;top:379.96px;width:0.8px;height:11.02px;background:#dde3e7"></div>
<div style="position:absolute;left:399.20000000000005px;top:379.96px;width:0.8px;height:11.02px;background:#dde3e7"></div>
<div style="position:absolute;left:445.1px;top:379.96px;width:0.8px;height:11.02px;background:#dde3e7"></div>
<div style="position:absolute;left:490.3px;top:379.96px;width:0.8px;height:11.02px;background:#dde3e7"></div>
<div style="position:absolute;left:582.6px;top:379.96px;width:0.8px;height:11.02px;background:#dde3e7"></div>
<div style="position:absolute;left:119.32px;top:383.00px;font-size:6.8px;line-height:6.8px;font-weight:normal;color:#2a2a2a;white-space:pre;transform:scaleX(0.838);transform-origin:100% 0;-webkit-text-stroke:0.18px #2a2a2a;">0.00000</div>
<div style="position:absolute;left:151.10px;top:383.00px;font-size:6.8px;line-height:6.8px;font-weight:normal;color:#2a2a2a;white-space:pre;transform:scaleX(0.780);transform-origin:0 0;-webkit-text-stroke:0.18px #2a2a2a;">OTROS VARIOS FIJOS</div>
<div style="position:absolute;left:330.99px;top:383.00px;font-size:6.8px;line-height:6.8px;font-weight:normal;color:#2a2a2a;white-space:pre;transform:scaleX(0.830);transform-origin:100% 0;-webkit-text-stroke:0.18px #2a2a2a;">41776</div>
<div style="position:absolute;left:391.92px;top:383.00px;font-size:6.8px;line-height:6.8px;font-weight:normal;color:#2a2a2a;white-space:pre;transform:scaleX(0.899);transform-origin:100% 0;-webkit-text-stroke:0.18px #2a2a2a;">0</div>
<svg style="position:absolute;left:402.8px;top:382.56px;opacity:.72" width="31" height="6"><use href="#mz0"/></svg>
<svg style="position:absolute;left:493.8px;top:382.56px;opacity:.85" width="21" height="6" viewBox="0 0 21 6" preserveAspectRatio="none"><use href="#mc0"/></svg>
<div style="position:absolute;left:586.00px;top:383.00px;font-size:6.8px;line-height:6.8px;font-weight:normal;color:#2a2a2a;white-space:pre;transform:scaleX(0.780);transform-origin:0 0;-webkit-text-stroke:0.18px #2a2a2a;">INGENIERIA</div>
<div style="position:absolute;left:101px;top:390.98px;width:573px;height:11.02px;background:#eef3f6"></div>
<div style="position:absolute;left:101px;top:401.2px;width:573px;height:0.8px;background:#dfe5e9"></div>
<div style="position:absolute;left:109.8px;top:390.98px;width:0.8px;height:11.02px;background:#dde3e7"></div>
<div style="position:absolute;left:146.79999999999998px;top:390.98px;width:0.8px;height:11.02px;background:#dde3e7"></div>
<div style="position:absolute;left:215.9px;top:390.98px;width:0.8px;height:11.02px;background:#dde3e7"></div>
<div style="position:absolute;left:307.40000000000003px;top:390.98px;width:0.8px;height:11.02px;background:#dde3e7"></div>
<div style="position:absolute;left:353.1px;top:390.98px;width:0.8px;height:11.02px;background:#dde3e7"></div>
<div style="position:absolute;left:399.20000000000005px;top:390.98px;width:0.8px;height:11.02px;background:#dde3e7"></div>
<div style="position:absolute;left:445.1px;top:390.98px;width:0.8px;height:11.02px;background:#dde3e7"></div>
<div style="position:absolute;left:490.3px;top:390.98px;width:0.8px;height:11.02px;background:#dde3e7"></div>
<div style="position:absolute;left:582.6px;top:390.98px;width:0.8px;height:11.02px;background:#dde3e7"></div>
<div style="position:absolute;left:119.32px;top:394.02px;font-size:6.8px;line-height:6.8px;font-weight:normal;color:#2a2a2a;white-space:pre;transform:scaleX(0.838);transform-origin:100% 0;-webkit-text-stroke:0.18px #2a2a2a;">0.00000</div>
<div style="position:absolute;left:151.10px;top:394.02px;font-size:6.8px;line-height:6.8px;font-weight:normal;color:#2a2a2a;white-space:pre;transform:scaleX(0.780);transform-origin:0 0;-webkit-text-stroke:0.18px #2a2a2a;">MANTENIMIENTO ED...</div>
<div style="position:absolute;left:330.99px;top:394.02px;font-size:6.8px;line-height:6.8px;font-weight:normal;color:#2a2a2a;white-space:pre;transform:scaleX(0.830);transform-origin:100% 0;-webkit-text-stroke:0.18px #2a2a2a;">41779</div>
<div style="position:absolute;left:391.92px;top:394.02px;font-size:6.8px;line-height:6.8px;font-weight:normal;color:#2a2a2a;white-space:pre;transform:scaleX(0.899);transform-origin:100% 0;-webkit-text-stroke:0.18px #2a2a2a;">0</div>
<svg style="position:absolute;left:402.8px;top:393.58px;opacity:.72" width="31" height="6"><use href="#mz1"/></svg>
<svg style="position:absolute;left:493.8px;top:393.58px;opacity:.85" width="18" height="6" viewBox="0 0 18 6" preserveAspectRatio="none"><use href="#mc1"/></svg>
<div style="position:absolute;left:586.00px;top:394.02px;font-size:6.8px;line-height:6.8px;font-weight:normal;color:#2a2a2a;white-space:pre;transform:scaleX(0.780);transform-origin:0 0;-webkit-text-stroke:0.18px #2a2a2a;">INGENIERIA</div>
<div style="position:absolute;left:101px;top:402.0px;width:573px;height:11.02px;background:#ffffff"></div>
<div style="position:absolute;left:101px;top:412.21999999999997px;width:573px;height:0.8px;background:#dfe5e9"></div>
<div style="position:absolute;left:109.8px;top:402.0px;width:0.8px;height:11.02px;background:#dde3e7"></div>
<div style="position:absolute;left:146.79999999999998px;top:402.0px;width:0.8px;height:11.02px;background:#dde3e7"></div>
<div style="position:absolute;left:215.9px;top:402.0px;width:0.8px;height:11.02px;background:#dde3e7"></div>
<div style="position:absolute;left:307.40000000000003px;top:402.0px;width:0.8px;height:11.02px;background:#dde3e7"></div>
<div style="position:absolute;left:353.1px;top:402.0px;width:0.8px;height:11.02px;background:#dde3e7"></div>
<div style="position:absolute;left:399.20000000000005px;top:402.0px;width:0.8px;height:11.02px;background:#dde3e7"></div>
<div style="position:absolute;left:445.1px;top:402.0px;width:0.8px;height:11.02px;background:#dde3e7"></div>
<div style="position:absolute;left:490.3px;top:402.0px;width:0.8px;height:11.02px;background:#dde3e7"></div>
<div style="position:absolute;left:582.6px;top:402.0px;width:0.8px;height:11.02px;background:#dde3e7"></div>
<div style="position:absolute;left:119.32px;top:405.04px;font-size:6.8px;line-height:6.8px;font-weight:normal;color:#2a2a2a;white-space:pre;transform:scaleX(0.838);transform-origin:100% 0;-webkit-text-stroke:0.18px #2a2a2a;">0.00000</div>
<div style="position:absolute;left:151.10px;top:405.04px;font-size:6.8px;line-height:6.8px;font-weight:normal;color:#2a2a2a;white-space:pre;transform:scaleX(0.780);transform-origin:0 0;-webkit-text-stroke:0.18px #2a2a2a;">SUMINISTROS</div>
<div style="position:absolute;left:330.99px;top:405.04px;font-size:6.8px;line-height:6.8px;font-weight:normal;color:#2a2a2a;white-space:pre;transform:scaleX(0.830);transform-origin:100% 0;-webkit-text-stroke:0.18px #2a2a2a;">41791</div>
<div style="position:absolute;left:391.92px;top:405.04px;font-size:6.8px;line-height:6.8px;font-weight:normal;color:#2a2a2a;white-space:pre;transform:scaleX(0.899);transform-origin:100% 0;-webkit-text-stroke:0.18px #2a2a2a;">0</div>
<svg style="position:absolute;left:402.8px;top:404.60px;opacity:.72" width="31" height="6"><use href="#mz2"/></svg>
<div style="position:absolute;left:586.00px;top:405.04px;font-size:6.8px;line-height:6.8px;font-weight:normal;color:#2a2a2a;white-space:pre;transform:scaleX(0.780);transform-origin:0 0;-webkit-text-stroke:0.18px #2a2a2a;">null</div>
<div style="position:absolute;left:101px;top:413.02px;width:573px;height:11.02px;background:#eef3f6"></div>
<div style="position:absolute;left:101px;top:423.23999999999995px;width:573px;height:0.8px;background:#dfe5e9"></div>
<div style="position:absolute;left:109.8px;top:413.02px;width:0.8px;height:11.02px;background:#dde3e7"></div>
<div style="position:absolute;left:146.79999999999998px;top:413.02px;width:0.8px;height:11.02px;background:#dde3e7"></div>
<div style="position:absolute;left:215.9px;top:413.02px;width:0.8px;height:11.02px;background:#dde3e7"></div>
<div style="position:absolute;left:307.40000000000003px;top:413.02px;width:0.8px;height:11.02px;background:#dde3e7"></div>
<div style="position:absolute;left:353.1px;top:413.02px;width:0.8px;height:11.02px;background:#dde3e7"></div>
<div style="position:absolute;left:399.20000000000005px;top:413.02px;width:0.8px;height:11.02px;background:#dde3e7"></div>
<div style="position:absolute;left:445.1px;top:413.02px;width:0.8px;height:11.02px;background:#dde3e7"></div>
<div style="position:absolute;left:490.3px;top:413.02px;width:0.8px;height:11.02px;background:#dde3e7"></div>
<div style="position:absolute;left:582.6px;top:413.02px;width:0.8px;height:11.02px;background:#dde3e7"></div>
<div style="position:absolute;left:119.32px;top:416.06px;font-size:6.8px;line-height:6.8px;font-weight:normal;color:#2a2a2a;white-space:pre;transform:scaleX(0.838);transform-origin:100% 0;-webkit-text-stroke:0.18px #2a2a2a;">0.00000</div>
<div style="position:absolute;left:151.10px;top:416.06px;font-size:6.8px;line-height:6.8px;font-weight:normal;color:#2a2a2a;white-space:pre;transform:scaleX(0.780);transform-origin:0 0;-webkit-text-stroke:0.18px #2a2a2a;">MANTENIMIENTO ED...</div>
<div style="position:absolute;left:330.99px;top:416.06px;font-size:6.8px;line-height:6.8px;font-weight:normal;color:#2a2a2a;white-space:pre;transform:scaleX(0.830);transform-origin:100% 0;-webkit-text-stroke:0.18px #2a2a2a;">41800</div>
<div style="position:absolute;left:391.92px;top:416.06px;font-size:6.8px;line-height:6.8px;font-weight:normal;color:#2a2a2a;white-space:pre;transform:scaleX(0.899);transform-origin:100% 0;-webkit-text-stroke:0.18px #2a2a2a;">0</div>
<svg style="position:absolute;left:402.8px;top:415.62px;opacity:.72" width="31" height="6"><use href="#mz0"/></svg>
<svg style="position:absolute;left:493.8px;top:415.62px;opacity:.85" width="18" height="6" viewBox="0 0 18 6" preserveAspectRatio="none"><use href="#mc0"/></svg>
<div style="position:absolute;left:586.00px;top:416.06px;font-size:6.8px;line-height:6.8px;font-weight:normal;color:#2a2a2a;white-space:pre;transform:scaleX(0.780);transform-origin:0 0;-webkit-text-stroke:0.18px #2a2a2a;">INGENIERIA</div>
<div style="position:absolute;left:101px;top:424.03999999999996px;width:573px;height:11.02px;background:#ffffff"></div>
<div style="position:absolute;left:101px;top:434.25999999999993px;width:573px;height:0.8px;background:#dfe5e9"></div>
<div style="position:absolute;left:109.8px;top:424.03999999999996px;width:0.8px;height:11.02px;background:#dde3e7"></div>
<div style="position:absolute;left:146.79999999999998px;top:424.03999999999996px;width:0.8px;height:11.02px;background:#dde3e7"></div>
<div style="position:absolute;left:215.9px;top:424.03999999999996px;width:0.8px;height:11.02px;background:#dde3e7"></div>
<div style="position:absolute;left:307.40000000000003px;top:424.03999999999996px;width:0.8px;height:11.02px;background:#dde3e7"></div>
<div style="position:absolute;left:353.1px;top:424.03999999999996px;width:0.8px;height:11.02px;background:#dde3e7"></div>
<div style="position:absolute;left:399.20000000000005px;top:424.03999999999996px;width:0.8px;height:11.02px;background:#dde3e7"></div>
<div style="position:absolute;left:445.1px;top:424.03999999999996px;width:0.8px;height:11.02px;background:#dde3e7"></div>
<div style="position:absolute;left:490.3px;top:424.03999999999996px;width:0.8px;height:11.02px;background:#dde3e7"></div>
<div style="position:absolute;left:582.6px;top:424.03999999999996px;width:0.8px;height:11.02px;background:#dde3e7"></div>
<div style="position:absolute;left:119.32px;top:427.08px;font-size:6.8px;line-height:6.8px;font-weight:normal;color:#2a2a2a;white-space:pre;transform:scaleX(0.838);transform-origin:100% 0;-webkit-text-stroke:0.18px #2a2a2a;">0.00000</div>
<div style="position:absolute;left:151.10px;top:427.08px;font-size:6.8px;line-height:6.8px;font-weight:normal;color:#2a2a2a;white-space:pre;transform:scaleX(0.780);transform-origin:0 0;-webkit-text-stroke:0.18px #2a2a2a;">SUMINISTROS</div>
<div style="position:absolute;left:330.99px;top:427.08px;font-size:6.8px;line-height:6.8px;font-weight:normal;color:#2a2a2a;white-space:pre;transform:scaleX(0.830);transform-origin:100% 0;-webkit-text-stroke:0.18px #2a2a2a;">41803</div>
<div style="position:absolute;left:391.92px;top:427.08px;font-size:6.8px;line-height:6.8px;font-weight:normal;color:#2a2a2a;white-space:pre;transform:scaleX(0.899);transform-origin:100% 0;-webkit-text-stroke:0.18px #2a2a2a;">0</div>
<svg style="position:absolute;left:402.8px;top:426.64px;opacity:.72" width="31" height="6"><use href="#mz1"/></svg>
<div style="position:absolute;left:586.00px;top:427.08px;font-size:6.8px;line-height:6.8px;font-weight:normal;color:#2a2a2a;white-space:pre;transform:scaleX(0.780);transform-origin:0 0;-webkit-text-stroke:0.18px #2a2a2a;">null</div>
<div style="position:absolute;left:101px;top:435.05999999999995px;width:573px;height:11.02px;background:#eef3f6"></div>
<div style="position:absolute;left:101px;top:445.2799999999999px;width:573px;height:0.8px;background:#dfe5e9"></div>
<div style="position:absolute;left:109.8px;top:435.05999999999995px;width:0.8px;height:11.02px;background:#dde3e7"></div>
<div style="position:absolute;left:146.79999999999998px;top:435.05999999999995px;width:0.8px;height:11.02px;background:#dde3e7"></div>
<div style="position:absolute;left:215.9px;top:435.05999999999995px;width:0.8px;height:11.02px;background:#dde3e7"></div>
<div style="position:absolute;left:307.40000000000003px;top:435.05999999999995px;width:0.8px;height:11.02px;background:#dde3e7"></div>
<div style="position:absolute;left:353.1px;top:435.05999999999995px;width:0.8px;height:11.02px;background:#dde3e7"></div>
<div style="position:absolute;left:399.20000000000005px;top:435.05999999999995px;width:0.8px;height:11.02px;background:#dde3e7"></div>
<div style="position:absolute;left:445.1px;top:435.05999999999995px;width:0.8px;height:11.02px;background:#dde3e7"></div>
<div style="position:absolute;left:490.3px;top:435.05999999999995px;width:0.8px;height:11.02px;background:#dde3e7"></div>
<div style="position:absolute;left:582.6px;top:435.05999999999995px;width:0.8px;height:11.02px;background:#dde3e7"></div>
<div style="position:absolute;left:119.32px;top:438.10px;font-size:6.8px;line-height:6.8px;font-weight:normal;color:#2a2a2a;white-space:pre;transform:scaleX(0.838);transform-origin:100% 0;-webkit-text-stroke:0.18px #2a2a2a;">0.00000</div>
<div style="position:absolute;left:151.10px;top:438.10px;font-size:6.8px;line-height:6.8px;font-weight:normal;color:#2a2a2a;white-space:pre;transform:scaleX(0.780);transform-origin:0 0;-webkit-text-stroke:0.18px #2a2a2a;">MATERIALES Y REPU...</div>
<div style="position:absolute;left:330.99px;top:438.10px;font-size:6.8px;line-height:6.8px;font-weight:normal;color:#2a2a2a;white-space:pre;transform:scaleX(0.830);transform-origin:100% 0;-webkit-text-stroke:0.18px #2a2a2a;">41803</div>
<div style="position:absolute;left:391.92px;top:438.10px;font-size:6.8px;line-height:6.8px;font-weight:normal;color:#2a2a2a;white-space:pre;transform:scaleX(0.899);transform-origin:100% 0;-webkit-text-stroke:0.18px #2a2a2a;">0</div>
<svg style="position:absolute;left:402.8px;top:437.66px;opacity:.72" width="31" height="6"><use href="#mz2"/></svg>
<div style="position:absolute;left:586.00px;top:438.10px;font-size:6.8px;line-height:6.8px;font-weight:normal;color:#2a2a2a;white-space:pre;transform:scaleX(0.780);transform-origin:0 0;-webkit-text-stroke:0.18px #2a2a2a;">null</div>
<div style="position:absolute;left:101px;top:446.08000000000004px;width:573px;height:11.02px;background:#ffffff"></div>
<div style="position:absolute;left:101px;top:456.3px;width:573px;height:0.8px;background:#dfe5e9"></div>
<div style="position:absolute;left:109.8px;top:446.08000000000004px;width:0.8px;height:11.02px;background:#dde3e7"></div>
<div style="position:absolute;left:146.79999999999998px;top:446.08000000000004px;width:0.8px;height:11.02px;background:#dde3e7"></div>
<div style="position:absolute;left:215.9px;top:446.08000000000004px;width:0.8px;height:11.02px;background:#dde3e7"></div>
<div style="position:absolute;left:307.40000000000003px;top:446.08000000000004px;width:0.8px;height:11.02px;background:#dde3e7"></div>
<div style="position:absolute;left:353.1px;top:446.08000000000004px;width:0.8px;height:11.02px;background:#dde3e7"></div>
<div style="position:absolute;left:399.20000000000005px;top:446.08000000000004px;width:0.8px;height:11.02px;background:#dde3e7"></div>
<div style="position:absolute;left:445.1px;top:446.08000000000004px;width:0.8px;height:11.02px;background:#dde3e7"></div>
<div style="position:absolute;left:490.3px;top:446.08000000000004px;width:0.8px;height:11.02px;background:#dde3e7"></div>
<div style="position:absolute;left:582.6px;top:446.08000000000004px;width:0.8px;height:11.02px;background:#dde3e7"></div>
<div style="position:absolute;left:119.32px;top:449.12px;font-size:6.8px;line-height:6.8px;font-weight:normal;color:#2a2a2a;white-space:pre;transform:scaleX(0.838);transform-origin:100% 0;-webkit-text-stroke:0.18px #2a2a2a;">0.00000</div>
<div style="position:absolute;left:151.10px;top:449.12px;font-size:6.8px;line-height:6.8px;font-weight:normal;color:#2a2a2a;white-space:pre;transform:scaleX(0.780);transform-origin:0 0;-webkit-text-stroke:0.18px #2a2a2a;">SUMINISTROS</div>
<div style="position:absolute;left:330.99px;top:449.12px;font-size:6.8px;line-height:6.8px;font-weight:normal;color:#2a2a2a;white-space:pre;transform:scaleX(0.830);transform-origin:100% 0;-webkit-text-stroke:0.18px #2a2a2a;">41803</div>
<div style="position:absolute;left:391.92px;top:449.12px;font-size:6.8px;line-height:6.8px;font-weight:normal;color:#2a2a2a;white-space:pre;transform:scaleX(0.899);transform-origin:100% 0;-webkit-text-stroke:0.18px #2a2a2a;">0</div>
<svg style="position:absolute;left:402.8px;top:448.68px;opacity:.72" width="31" height="6"><use href="#mz0"/></svg>
<div style="position:absolute;left:586.00px;top:449.12px;font-size:6.8px;line-height:6.8px;font-weight:normal;color:#2a2a2a;white-space:pre;transform:scaleX(0.780);transform-origin:0 0;-webkit-text-stroke:0.18px #2a2a2a;">null</div>
<div style="position:absolute;left:101px;top:457.1px;width:573px;height:11.02px;background:#eef3f6"></div>
<div style="position:absolute;left:101px;top:467.32px;width:573px;height:0.8px;background:#dfe5e9"></div>
<div style="position:absolute;left:109.8px;top:457.1px;width:0.8px;height:11.02px;background:#dde3e7"></div>
<div style="position:absolute;left:146.79999999999998px;top:457.1px;width:0.8px;height:11.02px;background:#dde3e7"></div>
<div style="position:absolute;left:215.9px;top:457.1px;width:0.8px;height:11.02px;background:#dde3e7"></div>
<div style="position:absolute;left:307.40000000000003px;top:457.1px;width:0.8px;height:11.02px;background:#dde3e7"></div>
<div style="position:absolute;left:353.1px;top:457.1px;width:0.8px;height:11.02px;background:#dde3e7"></div>
<div style="position:absolute;left:399.20000000000005px;top:457.1px;width:0.8px;height:11.02px;background:#dde3e7"></div>
<div style="position:absolute;left:445.1px;top:457.1px;width:0.8px;height:11.02px;background:#dde3e7"></div>
<div style="position:absolute;left:490.3px;top:457.1px;width:0.8px;height:11.02px;background:#dde3e7"></div>
<div style="position:absolute;left:582.6px;top:457.1px;width:0.8px;height:11.02px;background:#dde3e7"></div>
<div style="position:absolute;left:119.32px;top:460.14px;font-size:6.8px;line-height:6.8px;font-weight:normal;color:#2a2a2a;white-space:pre;transform:scaleX(0.838);transform-origin:100% 0;-webkit-text-stroke:0.18px #2a2a2a;">0.00000</div>
<div style="position:absolute;left:151.10px;top:460.14px;font-size:6.8px;line-height:6.8px;font-weight:normal;color:#2a2a2a;white-space:pre;transform:scaleX(0.780);transform-origin:0 0;-webkit-text-stroke:0.18px #2a2a2a;">SUMINISTROS</div>
<div style="position:absolute;left:330.99px;top:460.14px;font-size:6.8px;line-height:6.8px;font-weight:normal;color:#2a2a2a;white-space:pre;transform:scaleX(0.830);transform-origin:100% 0;-webkit-text-stroke:0.18px #2a2a2a;">41803</div>
<div style="position:absolute;left:391.92px;top:460.14px;font-size:6.8px;line-height:6.8px;font-weight:normal;color:#2a2a2a;white-space:pre;transform:scaleX(0.899);transform-origin:100% 0;-webkit-text-stroke:0.18px #2a2a2a;">0</div>
<div style="position:absolute;left:402.80px;top:460.14px;font-size:6.8px;line-height:6.8px;font-weight:normal;color:#2a2a2a;white-space:pre;transform:scaleX(0.701);transform-origin:0 0;-webkit-text-stroke:0.18px #2a2a2a;">RIMAX CALI</div>
<div style="position:absolute;left:586.00px;top:460.14px;font-size:6.8px;line-height:6.8px;font-weight:normal;color:#2a2a2a;white-space:pre;transform:scaleX(0.780);transform-origin:0 0;-webkit-text-stroke:0.18px #2a2a2a;">null</div>
</div>
<div style="position:absolute;left:0;top:0;width:690px;height:474px;clip-path:inset(181.8px 16px 9px 101px)">
<div style="position:absolute;left:101px;top:192.22px;width:573px;height:11.4px;border-top:1.1px solid #6fb2dc;border-bottom:1.1px solid #6fb2dc;box-sizing:border-box"></div>
<div style="position:absolute;left:109.60000000000001px;top:192.62px;width:1.2px;height:11px;background:#62a8d8"></div>
<div style="position:absolute;left:146.6px;top:192.62px;width:1.2px;height:11px;background:#62a8d8"></div>
<div style="position:absolute;left:215.70000000000002px;top:192.62px;width:1.2px;height:11px;background:#62a8d8"></div>
<div style="position:absolute;left:307.2px;top:192.62px;width:1.2px;height:11px;background:#62a8d8"></div>
<div style="position:absolute;left:352.9px;top:192.62px;width:1.2px;height:11px;background:#62a8d8"></div>
<div style="position:absolute;left:399.0px;top:192.62px;width:1.2px;height:11px;background:#62a8d8"></div>
<div style="position:absolute;left:444.9px;top:192.62px;width:1.2px;height:11px;background:#62a8d8"></div>
<div style="position:absolute;left:490.09999999999997px;top:192.62px;width:1.2px;height:11px;background:#62a8d8"></div>
<div style="position:absolute;left:582.4px;top:192.62px;width:1.2px;height:11px;background:#62a8d8"></div>
<svg style="position:absolute;left:101px;top:196px" width="3" height="4" viewBox="0 0 3 4"><path d="M0 0L2.5 2L0 4Z" fill="#1b3b55"/></svg>
<div style="position:absolute;left:147.3px;top:192.32px;width:69px;height:11.3px;border:1.1px solid #3a86c4;box-sizing:border-box"></div>
<svg style="position:absolute;left:208.5px;top:197px" width="3.5" height="2.5" viewBox="0 0 4 3"><path d="M0 0H4L2 3Z" fill="#777"/></svg>
<div style="position:absolute;left:399.8px;top:192.32px;width:45.6px;height:11.3px;background:#fffdf0;border:1.1px solid #3a86c4;box-sizing:border-box"></div>
<svg style="position:absolute;left:403.5px;top:195.42px;opacity:.8" width="20" height="6"><use href="#mz1"/></svg>
<div style="position:absolute;left:425px;top:199.02px;width:6px;height:1.3px;background:#b9b3ae;filter:blur(0.3px)"></div>
<svg style="position:absolute;left:437.5px;top:197px" width="3.5" height="2.5" viewBox="0 0 4 3"><path d="M0 0H4L2 3Z" fill="#777"/></svg>
<div style="position:absolute;left:491.2px;top:193.42000000000002px;width:90.5px;height:9.5px;background:#eaf1e4"></div>
<svg style="position:absolute;left:493.8px;top:195.42px;opacity:.45" width="21" height="6"><use href="#mc2"/></svg>
<div style="position:absolute;left:582.7px;top:192.32px;width:90.6px;height:11.3px;background:#fffdf0;border:1.1px solid #3a86c4;box-sizing:border-box"></div>
<div style="position:absolute;left:585.5px;top:194.22px;width:32px;height:8.2px;background:#2a66a0"></div>
<div style="position:absolute;left:586.30px;top:195.66px;font-size:6.8px;line-height:6.8px;font-weight:normal;color:#f4f8fb;white-space:pre;transform:scaleX(0.780);transform-origin:0 0;">INGENIERIA</div>
<div style="position:absolute;left:119.32px;top:195.66px;font-size:6.8px;line-height:6.8px;font-weight:normal;color:#3a86c2;white-space:pre;transform:scaleX(0.838);transform-origin:100% 0;-webkit-text-stroke:0.18px #3a86c2;">0.00000</div>
<div style="position:absolute;left:151.10px;top:195.66px;font-size:6.8px;line-height:6.8px;font-weight:normal;color:#2a2a2a;white-space:pre;transform:scaleX(0.780);transform-origin:0 0;-webkit-text-stroke:0.18px #2a2a2a;">MANTENIMIENT...</div>
<div style="position:absolute;left:330.99px;top:195.66px;font-size:6.8px;line-height:6.8px;font-weight:normal;color:#2a2a2a;white-space:pre;transform:scaleX(0.830);transform-origin:100% 0;-webkit-text-stroke:0.18px #2a2a2a;">41209</div>
<div style="position:absolute;left:391.92px;top:195.66px;font-size:6.8px;line-height:6.8px;font-weight:normal;color:#2a2a2a;white-space:pre;transform:scaleX(0.899);transform-origin:100% 0;-webkit-text-stroke:0.18px #2a2a2a;">0</div>
</div>
<svg style="position:absolute;left:0;top:0" width="690" height="474"><line x1="436.5" y1="146" x2="579" y2="156.8" stroke="#f2070d" stroke-width="1.05"/><path d="M584.3 157.2L578.2 153.9L578.0 159.6Z" fill="#f2070d"/></svg>
<div style="position:absolute;left:583.5px;top:147.6px;width:91px;height:17.4px;border:2.3px solid #f2070d;box-sizing:border-box"></div>
<div style="position:absolute;left:674px;top:181.8px;width:4.4px;height:283.2px;background:#f0f0f0"></div>
<div style="position:absolute;left:674.4px;top:181.5px;width:3.6px;height:60px;background:#c1c1c1"></div>
<div style="position:absolute;left:101px;top:465px;width:573px;height:3px;background:#f1f1f1"></div>
<div style="position:absolute;left:456.8px;top:465px;width:217.2px;height:3px;background:#c1c1c1"></div>
<div style="position:absolute;left:674px;top:465px;width:4.4px;height:3px;background:#fff"></div>
<div style="position:absolute;left:435px;top:0px;width:6px;height:3.3px;background:#efc2a6"></div>
<div style="position:absolute;left:435px;top:3.3px;width:6px;height:5.4px;background:#e9c9b3"></div>
<div style="position:absolute;left:441px;top:0px;width:14px;height:3.3px;background:#e5ae94"></div>
<div style="position:absolute;left:441px;top:3.3px;width:14px;height:5.4px;background:#dbb8aa"></div>
<div style="position:absolute;left:455px;top:0px;width:23px;height:3.3px;background:#e9a98c"></div>
<div style="position:absolute;left:455px;top:3.3px;width:23px;height:5.4px;background:#d9b2a3"></div>
<div style="position:absolute;left:478px;top:0px;width:22px;height:3.3px;background:#e7a88b"></div>
<div style="position:absolute;left:478px;top:3.3px;width:22px;height:5.4px;background:#dcb6a8"></div>
<div style="position:absolute;left:500px;top:0px;width:25px;height:3.3px;background:#e4ad95"></div>
<div style="position:absolute;left:500px;top:3.3px;width:25px;height:5.4px;background:#d9b7ab"></div>
<div style="position:absolute;left:525px;top:0px;width:23px;height:3.3px;background:#e8a98c"></div>
<div style="position:absolute;left:525px;top:3.3px;width:23px;height:5.4px;background:#dcb3a4"></div>
<div style="position:absolute;left:548px;top:0px;width:22px;height:3.3px;background:#e3a88e"></div>
<div style="position:absolute;left:548px;top:3.3px;width:22px;height:5.4px;background:#d8b6aa"></div>
<div style="position:absolute;left:570px;top:0px;width:25px;height:3.3px;background:#eeae90"></div>
<div style="position:absolute;left:570px;top:3.3px;width:25px;height:5.4px;background:#e3bcaa"></div>
<div style="position:absolute;left:595px;top:0px;width:25px;height:3.3px;background:#e6a88c"></div>
<div style="position:absolute;left:595px;top:3.3px;width:25px;height:5.4px;background:#dbb5a7"></div>
<div style="position:absolute;left:620px;top:0px;width:25px;height:3.3px;background:#e8aa8e"></div>
<div style="position:absolute;left:620px;top:3.3px;width:25px;height:5.4px;background:#dcb4a6"></div>
<div style="position:absolute;left:645px;top:0px;width:23px;height:3.3px;background:#e4a98f"></div>
<div style="position:absolute;left:645px;top:3.3px;width:23px;height:5.4px;background:#d9b5a9"></div>
<div style="position:absolute;left:668px;top:0px;width:22px;height:3.3px;background:#e9a98b"></div>
<div style="position:absolute;left:668px;top:3.3px;width:22px;height:5.4px;background:#dbb3a5"></div>
<svg style="position:absolute;left:605px;top:312px" width="6" height="9" viewBox="0 0 6 9"><path d="M0.5 0.5V7.5L2.2 5.8L3.5 8.5L4.5 8L3.3 5.4H5.5Z" fill="#fff" stroke="#333" stroke-width="0.6"/></svg>
<div style="position:absolute;left:100.6px;top:146.6px;width:0.9px;height:318.6px;background:#c3cbd0"></div>
</body></html>
